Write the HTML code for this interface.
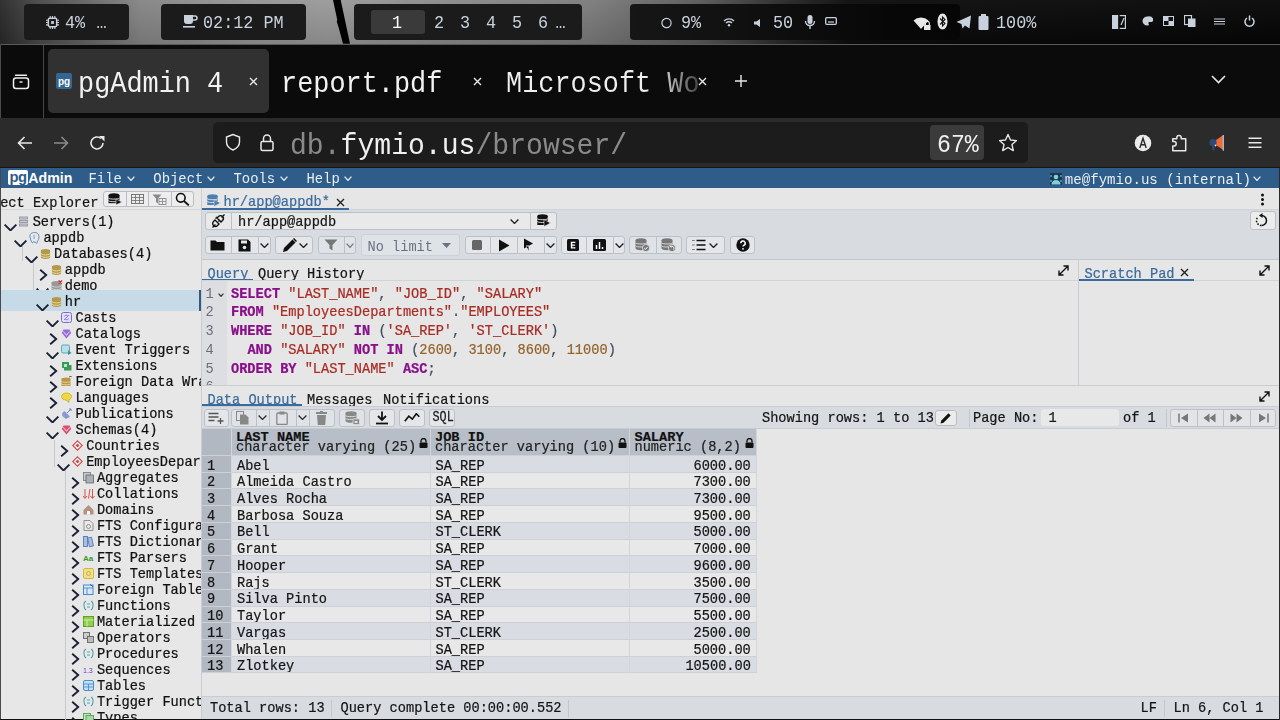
<!DOCTYPE html>
<html><head><meta charset="utf-8">
<style>
*{margin:0;padding:0;box-sizing:border-box}
html,body{width:1280px;height:720px;overflow:hidden;background:#000;font-family:"Liberation Mono",monospace}
.a{position:absolute}
</style></head><body>
<div class="a" style="left:0;top:0;width:1280px;height:44px;background:linear-gradient(90deg,#2a2a2a 0px,#4a4a4a 40px,#858585 140px,#959595 250px,#9a9a9a 330px,#8a8a8a 450px,#7c7c7c 590px,#5a5a5a 700px,#252525 790px,#0c0c0c 850px,#060606 1280px)"></div>
<div class="a" style="left:0px;top:0px;width:1280px;height:44px;background:linear-gradient(180deg,rgba(255,255,255,0.04),rgba(0,0,0,0.12));"></div>
<div class="a" style="left:24px;top:4px;width:105px;height:36px;background:#1b1b1b;border-radius:4px"></div>
<div class="a" style="left:161px;top:4px;width:145px;height:36px;background:#1b1b1b;border-radius:4px"></div>
<div class="a" style="left:354px;top:4px;width:228px;height:36px;background:#1b1b1b;border-radius:4px"></div>
<div class="a" style="left:630px;top:4px;width:330px;height:36px;background:linear-gradient(90deg,#161616,#0e0e0e 45%,#070707 80%,#060606);border-radius:4px"></div>
<svg class="a" style="left:325px;top:0px;" width="35" height="44" viewBox="0 0 35 44"><path d="M8 0L15.7 0L25 43.7L18 43.7L13.5 27L11.7 21.5L12.3 20Z" fill="#000"/></svg>
<div class="a" style="left:371px;top:10px;width:54px;height:24px;background:#3a3a3a;border-radius:3px"></div>
<div class="a" style="left:65.00px;top:15.93px;font-size:16.8px;line-height:16.8px;color:#c9d1dc;font-weight:400;transform:scaleY(1.08);transform-origin:0 12.87px;white-space:pre;">4%</div>
<div class="a" style="left:96.50px;top:16.13px;font-size:16.8px;line-height:16.8px;color:#c9d1dc;font-weight:400;transform:scaleY(1.08);transform-origin:0 12.87px;white-space:pre;">…</div>
<div class="a" style="left:203.00px;top:15.93px;font-size:16.8px;line-height:16.8px;color:#c9d1dc;font-weight:400;transform:scaleY(1.08);transform-origin:0 12.87px;white-space:pre;">02:12 PM</div>
<div class="a" style="left:392.00px;top:15.93px;font-size:16.8px;line-height:16.8px;color:#fff;font-weight:400;transform:scaleY(1.08);transform-origin:0 12.87px;white-space:pre;">1</div>
<div class="a" style="left:434.00px;top:15.93px;font-size:16.8px;line-height:16.8px;color:#c9d1dc;font-weight:400;transform:scaleY(1.08);transform-origin:0 12.87px;white-space:pre;">2</div>
<div class="a" style="left:460.00px;top:15.93px;font-size:16.8px;line-height:16.8px;color:#c9d1dc;font-weight:400;transform:scaleY(1.08);transform-origin:0 12.87px;white-space:pre;">3</div>
<div class="a" style="left:486.00px;top:15.93px;font-size:16.8px;line-height:16.8px;color:#c9d1dc;font-weight:400;transform:scaleY(1.08);transform-origin:0 12.87px;white-space:pre;">4</div>
<div class="a" style="left:512.00px;top:15.93px;font-size:16.8px;line-height:16.8px;color:#c9d1dc;font-weight:400;transform:scaleY(1.08);transform-origin:0 12.87px;white-space:pre;">5</div>
<div class="a" style="left:538.00px;top:15.93px;font-size:16.8px;line-height:16.8px;color:#c9d1dc;font-weight:400;transform:scaleY(1.08);transform-origin:0 12.87px;white-space:pre;">6</div>
<div class="a" style="left:555.50px;top:16.13px;font-size:16.8px;line-height:16.8px;color:#c9d1dc;font-weight:400;transform:scaleY(1.08);transform-origin:0 12.87px;white-space:pre;">…</div>
<div class="a" style="left:681.00px;top:15.93px;font-size:16.8px;line-height:16.8px;color:#c9d1dc;font-weight:400;transform:scaleY(1.08);transform-origin:0 12.87px;white-space:pre;">9%</div>
<div class="a" style="left:773.00px;top:15.93px;font-size:16.8px;line-height:16.8px;color:#c9d1dc;font-weight:400;transform:scaleY(1.08);transform-origin:0 12.87px;white-space:pre;">50</div>
<div class="a" style="left:996.00px;top:15.93px;font-size:16.8px;line-height:16.8px;color:#c9d1dc;font-weight:400;transform:scaleY(1.08);transform-origin:0 12.87px;white-space:pre;">100%</div>
<svg class="a" style="left:45.5px;top:16px;" width="13" height="13" viewBox="0 0 13 13"><g transform="scale(0.93)"><rect x="2.5" y="2.5" width="9" height="9" rx="1.5" fill="none" stroke="#c9d1dc" stroke-width="1.6"/><rect x="5.5" y="5.5" width="3" height="3" fill="#c9d1dc"/><path d="M4.5 0v2.5M7 0v2.5M9.5 0v2.5M4.5 11.5V14M7 11.5V14M9.5 11.5V14M0 4.5h2.5M0 7h2.5M0 9.5h2.5M11.5 4.5H14M11.5 7H14M11.5 9.5H14" stroke="#c9d1dc" stroke-width="1.2"/></g></svg>
<svg class="a" style="left:182px;top:13px;" width="16" height="16" viewBox="0 0 16 16"><path d="M2 2h9v6a3 3 0 0 1-3 3H5a3 3 0 0 1-3-3z" fill="#c9d1dc"/><path d="M11 3h2a1.5 1.5 0 0 1 0 4h-2" fill="none" stroke="#c9d1dc" stroke-width="1.5"/><rect x="1" y="13" width="12" height="1.6" fill="#c9d1dc"/></svg>
<svg class="a" style="left:660px;top:17px;" width="13" height="12" viewBox="0 0 13 12"><circle cx="6.5" cy="6" r="4.6" fill="none" stroke="#c9d1dc" stroke-width="1.2"/></svg>
<svg class="a" style="left:723px;top:17px;" width="12" height="10" viewBox="0 0 12 10"><path d="M1 4a7 7 0 0 1 10 0M3 6a4.2 4.2 0 0 1 6 0" fill="none" stroke="#c9d1dc" stroke-width="1.3"/><circle cx="6" cy="8.3" r="1.2" fill="#c9d1dc"/></svg>
<svg class="a" style="left:754px;top:19px;" width="9" height="8" viewBox="0 0 9 8"><path d="M0 2.5h2.5L6 0v8L2.5 5.5H0z" fill="#c9d1dc"/></svg>
<svg class="a" style="left:804px;top:14px;" width="12" height="16" viewBox="0 0 12 16"><rect x="3.5" y="1" width="5" height="9" rx="2.5" fill="#c9d1dc"/><path d="M1.5 7a4.5 4.5 0 0 0 9 0M6 11.5V15" fill="none" stroke="#c9d1dc" stroke-width="1.4"/></svg>
<svg class="a" style="left:825px;top:17px;" width="12" height="8" viewBox="0 0 12 8"><rect x="0.7" y="0.7" width="10.6" height="6.6" rx="1" fill="none" stroke="#c9d1dc" stroke-width="1.3"/><path d="M3 5h6" stroke="#c9d1dc" stroke-width="1.2"/></svg>
<svg class="a" style="left:913px;top:15px;" width="18" height="15" viewBox="0 0 18 15"><path d="M0.5 5.5a11 11 0 0 1 15 0L8 14z" fill="#e8e8e8"/><rect x="11" y="10" width="6.5" height="5" fill="#e8e8e8"/><path d="M12.3 10V8.3a2 2 0 0 1 4 0V10" fill="none" stroke="#e8e8e8" stroke-width="1.2"/></svg>
<svg class="a" style="left:937px;top:13px;" width="11" height="17" viewBox="0 0 11 17"><ellipse cx="5.5" cy="8.5" rx="5" ry="8" fill="#e8e8e8"/><path d="M3 5.5l5 5-2.5 2.5V4l2.5 2.5-5 5" fill="none" stroke="#111" stroke-width="1.1"/></svg>
<svg class="a" style="left:956px;top:15px;" width="16" height="14" viewBox="0 0 16 14"><path d="M15 0.5L0.5 7l5 2 1 4.5 2.5-3 4.5 3z" fill="#c9d1dc"/></svg>
<svg class="a" style="left:978px;top:14px;" width="11" height="16" viewBox="0 0 11 16"><rect x="3" y="0" width="5" height="2" fill="#c9d1dc"/><rect x="0.5" y="2" width="10" height="14" rx="1" fill="#c9d1dc"/></svg>
<svg class="a" style="left:1112px;top:13px;" width="14" height="17" viewBox="0 0 14 17"><rect x="0.6" y="2.6" width="12.8" height="12.8" fill="none" stroke="#c9d1dc" stroke-width="1.2"/><path d="M0.6 2.6h6v12.8h-6z" fill="#c9d1dc"/><path d="M7 0v17" stroke="#111" stroke-width="1.6"/><path d="M9 12l3-7" stroke="#c9d1dc" stroke-width="1.2"/></svg>
<svg class="a" style="left:1142px;top:16px;" width="11" height="10" viewBox="0 0 11 10"><path d="M5.5 0.5a5 4.5 0 0 0 0 9c1.5 0 1.5-1.3 1-2s0-1.6 1.3-1.6h1.3a2.5 2.5 0 0 0 2.3-2.5A5 4.5 0 0 0 5.5 0.5z" fill="#c9d1dc"/></svg>
<svg class="a" style="left:1163px;top:16px;" width="11" height="10" viewBox="0 0 11 10"><rect x="0.5" y="0.5" width="10" height="9" fill="#c9d1dc"/><rect x="5.5" y="0.5" width="5" height="4.5" fill="#111"/><rect x="0.5" y="5" width="5" height="4.5" fill="#111"/><rect x="0.5" y="0.5" width="10" height="9" fill="none" stroke="#c9d1dc"/></svg>
<svg class="a" style="left:1184px;top:15px;" width="12" height="12" viewBox="0 0 12 12"><rect x="0.5" y="0.5" width="7" height="9" fill="none" stroke="#c9d1dc" stroke-width="1.2"/><rect x="4" y="3.5" width="7.5" height="8.5" fill="#c9d1dc"/></svg>
<svg class="a" style="left:1214px;top:18px;" width="11" height="7" viewBox="0 0 11 7"><path d="M0 1h11M0 3.5h11M0 6h11" stroke="#c9d1dc" stroke-width="1"/></svg>
<svg class="a" style="left:1244px;top:15px;" width="11" height="12" viewBox="0 0 11 12"><path d="M3 3a4.5 4.5 0 1 0 5 0" fill="none" stroke="#c9d1dc" stroke-width="1.5"/><path d="M5.5 0.5v5" stroke="#c9d1dc" stroke-width="1.5"/></svg>
<div class="a" style="left:0px;top:44px;width:1280px;height:74px;background:#0b0b0b;"></div>
<div class="a" style="left:0px;top:44px;width:1280px;height:1px;background:#5a5a5a;"></div>
<div class="a" style="left:0px;top:44px;width:1px;height:676px;background:#4a4a4a;"></div>
<div class="a" style="left:43px;top:45px;width:1px;height:73px;background:#474747;"></div>
<div class="a" style="left:48px;top:49px;width:221px;height:64px;background:#313131;border-radius:5px"></div>
<div class="a" style="left:78.00px;top:71.69px;font-size:26.9px;line-height:26.9px;color:#f2f2f2;font-weight:400;transform:scaleY(1.13);transform-origin:0 20.61px;white-space:pre;">pgAdmin 4</div>
<div class="a" style="left:281.00px;top:71.69px;font-size:26.9px;line-height:26.9px;color:#f2f2f2;font-weight:400;transform:scaleY(1.13);transform-origin:0 20.61px;white-space:pre;">report.pdf</div>
<div class="a" style="left:506.00px;top:71.69px;font-size:26.9px;line-height:26.9px;color:#f2f2f2;font-weight:400;transform:scaleY(1.13);transform-origin:0 20.61px;white-space:pre;background:linear-gradient(90deg,#eee 0,#eee 150px,#444 192px);-webkit-background-clip:text;color:transparent">Microsoft Wo</div>
<svg class="a" style="left:12px;top:72px;" width="18" height="18" viewBox="0 0 18 18"><path d="M3.5 3.2h11" stroke="#f0f0f0" stroke-width="1.4" stroke-linecap="round"/><rect x="1.5" y="6" width="15" height="10.5" rx="2.5" fill="none" stroke="#f0f0f0" stroke-width="1.5"/><path d="M7.5 10h3" stroke="#f0f0f0" stroke-width="1.4"/></svg>
<svg class="a" style="left:56px;top:73px;" width="16" height="16" viewBox="0 0 16 16"><rect width="16" height="16" rx="2" fill="#336791"/><text x="8" y="11.5" font-family="Liberation Sans" font-weight="700" font-size="10" fill="#fff" text-anchor="middle">pg</text></svg>
<svg class="a" style="left:249px;top:77px;" width="9" height="9" viewBox="0 0 9 9"><path d="M1 1L8 8M8 1L1 8" stroke="#e8e8e8" stroke-width="1.4"/></svg>
<svg class="a" style="left:473px;top:77px;" width="9" height="9" viewBox="0 0 9 9"><path d="M1 1L8 8M8 1L1 8" stroke="#e8e8e8" stroke-width="1.4"/></svg>
<svg class="a" style="left:698px;top:77px;" width="9" height="9" viewBox="0 0 9 9"><path d="M1 1L8 8M8 1L1 8" stroke="#e8e8e8" stroke-width="1.4"/></svg>
<svg class="a" style="left:734px;top:74px;" width="14" height="14" viewBox="0 0 14 14"><path d="M7 1v12M1 7h12" stroke="#e8e8e8" stroke-width="1.4"/></svg>
<svg class="a" style="left:1211px;top:75px;" width="15" height="9" viewBox="0 0 15 9"><path d="M1 1l6.5 6.5L14 1" fill="none" stroke="#e8e8e8" stroke-width="1.6"/></svg>
<div class="a" style="left:0px;top:118px;width:1280px;height:49px;background:#2b2b2b;"></div>
<div class="a" style="left:0px;top:167px;width:1280px;height:1px;background:#151515;"></div>
<div class="a" style="left:213px;top:122px;width:815px;height:41px;background:#1c1c1c;border-radius:5px"></div>
<div class="a" style="left:930px;top:125px;width:54px;height:35px;background:#3b3b3b;border-radius:4px"></div>
<div class="a" style="left:290.00px;top:132.97px;font-size:28.1px;line-height:28.1px;color:#f0f0f0;font-weight:400;transform:scaleY(1.05);transform-origin:0 21.53px;white-space:pre;"><span style="color:#8a8a8a">db.</span>fymio.us<span style="color:#8a8a8a">/browser/</span></div>
<div class="a" style="left:937.00px;top:134.73px;font-size:23.2px;line-height:23.2px;color:#f0f0f0;font-weight:400;transform:scaleY(1.15);transform-origin:0 17.77px;white-space:pre;">67%</div>
<svg class="a" style="left:16px;top:134px;" width="18" height="18" viewBox="0 0 18 18"><path d="M16 9H2.5M8.5 3L2.5 9l6 6" fill="none" stroke="#e8e8e8" stroke-width="1.6"/></svg>
<svg class="a" style="left:52px;top:134px;" width="18" height="18" viewBox="0 0 18 18"><path d="M2 9h13.5M9.5 3l6 6-6 6" fill="none" stroke="#8a8a8a" stroke-width="1.6"/></svg>
<svg class="a" style="left:88px;top:134px;" width="18" height="18" viewBox="0 0 18 18"><path d="M15 9a6 6 0 1 1-2-4.5" fill="none" stroke="#e8e8e8" stroke-width="1.6"/><path d="M11 2h5.5v5.5z" fill="#e8e8e8"/></svg>
<svg class="a" style="left:224px;top:133px;" width="18" height="19" viewBox="0 0 18 19"><path d="M9 1.5L2.5 4v5c0 4 3 6.5 6.5 8 3.5-1.5 6.5-4 6.5-8V4z" fill="none" stroke="#e8e8e8" stroke-width="1.4"/></svg>
<svg class="a" style="left:259px;top:133px;" width="16" height="19" viewBox="0 0 16 19"><rect x="2" y="8.5" width="12" height="9" rx="1.5" fill="none" stroke="#e8e8e8" stroke-width="1.5"/><path d="M4.5 8.5V5.5a3.5 3.5 0 0 1 7 0v3" fill="none" stroke="#e8e8e8" stroke-width="1.5"/></svg>
<svg class="a" style="left:998px;top:133px;" width="20" height="19" viewBox="0 0 20 19"><path d="M10 1.5l2.5 5.5 6 .6-4.5 4 1.3 6L10 14.5l-5.3 3.1 1.3-6-4.5-4 6-.6z" fill="none" stroke="#e8e8e8" stroke-width="1.4" stroke-linejoin="round"/></svg>
<svg class="a" style="left:1134px;top:134px;" width="18" height="18" viewBox="0 0 18 18"><circle cx="9" cy="9" r="8.3" fill="#ececec"/><path d="M5.8 14L9 4.2 12.2 14M6.9 10.8h4.2" fill="none" stroke="#2b2b2b" stroke-width="1.4"/></svg>
<svg class="a" style="left:1172px;top:134px;" width="15" height="18" viewBox="0 0 15 18"><path d="M0.8 16.8V12h1.2a2.2 2.2 0 0 0 0-4.4H0.8V4.8h4V3.6a2.2 2.2 0 0 1 4.4 0v1.2h4.5v12z" fill="none" stroke="#e8e8e8" stroke-width="1.5" stroke-linejoin="round"/></svg>
<svg class="a" style="left:1208px;top:134px;" width="18" height="18" viewBox="0 0 18 18"><path d="M8 6l7-4.8v14.6L8 11z" fill="#f26a36"/><path d="M15.3 1v15.8" stroke="#a8c8e8" stroke-width="1.2"/><circle cx="5" cy="8.5" r="3.6" fill="#2a4a7a"/><path d="M3.8 11l1 5.5h1.8l-.6-5z" fill="#2a4a7a"/><circle cx="7.5" cy="11.5" r="0.9" fill="#ddd"/></svg>
<svg class="a" style="left:1248px;top:137px;" width="14" height="12" viewBox="0 0 14 12"><path d="M0.5 1.3h13M0.5 5.8h13M0.5 10.3h13" stroke="#e8e8e8" stroke-width="1.4"/></svg>
<div class="a" style="left:1px;top:168px;width:1279px;height:20px;background:#2e5d89;"></div>
<div class="a" style="left:1px;top:188px;width:1279px;height:531px;background:#e7e7e7;"></div>
<div class="a" style="left:0px;top:719px;width:1280px;height:1px;background:#111;"></div>
<div class="a" style="left:8px;top:170px;width:20px;height:15px;background:#fff;border-radius:2px"></div>
<div class="a" style="left:9.60px;top:170.26px;font-size:14.8px;line-height:14.8px;color:#2e5d89;font-weight:700;transform:scaleY(1.0);transform-origin:0 11.34px;white-space:pre;font-family:'Liberation Sans';letter-spacing:-0.6px">pg</div>
<div class="a" style="left:28.30px;top:170.72px;font-size:14.2px;line-height:14.2px;color:#fff;font-weight:700;transform:scaleY(1.0);transform-origin:0 10.88px;white-space:pre;font-family:'Liberation Sans'">Admin</div>
<div class="a" style="left:88.50px;top:172.95px;font-size:13.9px;line-height:13.9px;color:#e8eef4;font-weight:400;transform:scaleY(1.02);transform-origin:0 10.65px;white-space:pre;">File</div>
<svg class="a" style="left:126.6px;top:176px;" width="8" height="5" viewBox="0 0 8 5"><path d="M0.6 0.6L4.0 4.4L7.4 0.6" fill="none" stroke="#e8eef4" stroke-width="1.3"/></svg>
<div class="a" style="left:153.30px;top:172.95px;font-size:13.9px;line-height:13.9px;color:#e8eef4;font-weight:400;transform:scaleY(1.02);transform-origin:0 10.65px;white-space:pre;">Object</div>
<svg class="a" style="left:207px;top:176px;" width="8" height="5" viewBox="0 0 8 5"><path d="M0.6 0.6L4.0 4.4L7.4 0.6" fill="none" stroke="#e8eef4" stroke-width="1.3"/></svg>
<div class="a" style="left:233.50px;top:172.95px;font-size:13.9px;line-height:13.9px;color:#e8eef4;font-weight:400;transform:scaleY(1.02);transform-origin:0 10.65px;white-space:pre;">Tools</div>
<svg class="a" style="left:279.7px;top:176px;" width="8" height="5" viewBox="0 0 8 5"><path d="M0.6 0.6L4.0 4.4L7.4 0.6" fill="none" stroke="#e8eef4" stroke-width="1.3"/></svg>
<div class="a" style="left:306.40px;top:172.95px;font-size:13.9px;line-height:13.9px;color:#e8eef4;font-weight:400;transform:scaleY(1.02);transform-origin:0 10.65px;white-space:pre;">Help</div>
<svg class="a" style="left:343.5px;top:176px;" width="8" height="5" viewBox="0 0 8 5"><path d="M0.6 0.6L4.0 4.4L7.4 0.6" fill="none" stroke="#e8eef4" stroke-width="1.3"/></svg>
<svg class="a" style="left:1050px;top:173px;" width="12" height="12" viewBox="0 0 12 12"><rect width="12" height="12" fill="#1d3a55"/><circle cx="6" cy="4" r="2.3" fill="#7fd0d8"/><path d="M1.5 11.5c0-3 2-4.5 4.5-4.5s4.5 1.5 4.5 4.5z" fill="#7fd0d8"/><path d="M0 3h2M10 3h2M0 8h2M10 8h2" stroke="#7fd0d8" stroke-width="1"/></svg>
<div class="a" style="left:1064.80px;top:172.60px;font-size:14.1px;line-height:14.1px;color:#e8eef4;font-weight:400;transform:scaleY(1.02);transform-origin:0 10.80px;white-space:pre;">me@fymio.us (internal)</div>
<svg class="a" style="left:1253px;top:176px;" width="8" height="5" viewBox="0 0 8 5"><path d="M0.6 0.6L4.0 4.4L7.4 0.6" fill="none" stroke="#e8eef4" stroke-width="1.3"/></svg>
<div class="a" style="left:1px;top:188px;width:200px;height:21px;background:#e8e8e8;"></div>
<div class="a" style="left:1px;top:209px;width:200px;height:1px;background:#d3d6da;"></div>
<div class="a" style="left:-24.40px;top:196.54px;font-size:13.65px;line-height:13.65px;color:#151515;font-weight:400;transform:scaleY(1.1);transform-origin:0 10.46px;white-space:pre;-webkit-text-stroke:0.22px currentColor;">Object Explorer</div>
<div class="a" style="left:103px;top:191px;width:91px;height:16px;background:#ededed;border:1px solid #b9bdc3;border-radius:3px"></div>
<div class="a" style="left:126px;top:191px;width:1px;height:16px;background:#b9bdc3;"></div>
<div class="a" style="left:148px;top:191px;width:1px;height:16px;background:#b9bdc3;"></div>
<div class="a" style="left:171px;top:191px;width:1px;height:16px;background:#b9bdc3;"></div>
<svg class="a" style="left:108px;top:193px;" width="14" height="12" viewBox="0 0 14 12"><ellipse cx="6" cy="2.2" rx="5.5" ry="2" fill="#111"/><rect x="0.5" y="2.2" width="11" height="8" fill="#111"/><path d="M0.5 5.2c1.5 1.2 9.5 1.2 11 0M0.5 7.8c1.5 1.2 9.5 1.2 11 0" stroke="#ededed" stroke-width="0.9" fill="none"/><path d="M8 6l6 3-6 3z" fill="#111" stroke="#ededed" stroke-width="0.6"/></svg>
<svg class="a" style="left:131px;top:194px;" width="13" height="10" viewBox="0 0 13 10"><rect x="0.5" y="0.5" width="12" height="9" fill="none" stroke="#777" stroke-width="1"/><path d="M0.5 3.5h12M0.5 6.5h12M4.5 0.5v9M8.5 0.5v9" stroke="#777" stroke-width="0.9"/></svg>
<svg class="a" style="left:152px;top:194px;" width="15" height="11" viewBox="0 0 15 11"><path d="M0.5 0.5h9L6 4.5v5L4 8V4.5z" fill="#888"/><rect x="7" y="4.5" width="7" height="6" fill="none" stroke="#888" stroke-width="0.9"/><path d="M7 7.5h7M10.5 4.5v6" stroke="#888" stroke-width="0.8"/></svg>
<svg class="a" style="left:175px;top:192px;" width="15" height="14" viewBox="0 0 15 14"><circle cx="5.8" cy="5.8" r="4.3" fill="none" stroke="#111" stroke-width="1.6"/><path d="M9 9l4.8 4.4" stroke="#111" stroke-width="1.8"/></svg>
<div class="a" style="left:22px;top:246px;width:1px;height:15px;background:#c4c9d0;"></div>
<div class="a" style="left:33px;top:262px;width:1px;height:47px;background:#c4c9d0;"></div>
<div class="a" style="left:54px;top:440px;width:1px;height:27px;background:#c4c9d0;"></div>
<div class="a" style="left:65px;top:467px;width:1px;height:253px;background:#c4c9d0;"></div>
<svg class="a" style="left:18px;top:216px;" width="12" height="12" viewBox="0 0 12 12"><rect x="1" y="0.5" width="9" height="3" fill="#9a9aa8"/><rect x="1" y="4" width="9" height="3" fill="#9a9aa8"/><rect x="1" y="7.5" width="9" height="3" fill="#9a9aa8"/><path d="M2 2h7M2 5.5h7M2 9h7" stroke="#e0e0e8" stroke-width="0.7"/></svg>
<svg class="a" style="left:4px;top:224px;" width="13" height="7" viewBox="0 0 13 7"><path d="M0.6 0.6L6.5 6.4L12.4 0.6" fill="none" stroke="#1a2035" stroke-width="1.9"/></svg>
<div class="a" style="left:32.70px;top:215.54px;font-size:13.65px;line-height:13.65px;color:#111;font-weight:400;transform:scaleY(1.1);transform-origin:0 10.46px;white-space:pre;-webkit-text-stroke:0.22px currentColor;">Servers(1)</div>
<svg class="a" style="left:29px;top:232px;" width="12" height="12" viewBox="0 0 12 12"><path d="M5.5 0.5C2.5 0.5 0.5 2 1 5c.3 2 1 4 2 5.5.6.6 1.3.2 1.5-1 .3.6 1 .8 1.5.6.6 0 1 .6 1.2 1.2.5.2 1-.5 1-1.5.8-1 1.8-3 1.8-5 0-3-2-4.3-4.5-4.3z" fill="none" stroke="#5b8fc8" stroke-width="1"/><path d="M5 3v4" stroke="#5b8fc8" stroke-width="0.8"/></svg>
<svg class="a" style="left:14px;top:240px;" width="13" height="7" viewBox="0 0 13 7"><path d="M0.6 0.6L6.5 6.4L12.4 0.6" fill="none" stroke="#1a2035" stroke-width="1.9"/></svg>
<div class="a" style="left:43.40px;top:231.54px;font-size:13.65px;line-height:13.65px;color:#111;font-weight:400;transform:scaleY(1.1);transform-origin:0 10.46px;white-space:pre;-webkit-text-stroke:0.22px currentColor;">appdb</div>
<svg class="a" style="left:40px;top:248px;" width="12" height="12" viewBox="0 0 12 12"><ellipse cx="5.5" cy="2.8" rx="4.6" ry="1.7" fill="#b49a48"/><path d="M0.9 2.8v6.5c0 1 2 1.7 4.6 1.7s4.6-.7 4.6-1.7V2.8" fill="#b49a48"/><path d="M0.9 5.2c0 1 2 1.7 4.6 1.7s4.6-.7 4.6-1.7M0.9 7.6c0 1 2 1.7 4.6 1.7s4.6-.7 4.6-1.7" fill="none" stroke="#efe2b0" stroke-width="0.9"/></svg>
<svg class="a" style="left:25px;top:256px;" width="13" height="7" viewBox="0 0 13 7"><path d="M0.6 0.6L6.5 6.4L12.4 0.6" fill="none" stroke="#1a2035" stroke-width="1.9"/></svg>
<div class="a" style="left:54.10px;top:247.54px;font-size:13.65px;line-height:13.65px;color:#111;font-weight:400;transform:scaleY(1.1);transform-origin:0 10.46px;white-space:pre;-webkit-text-stroke:0.22px currentColor;">Databases(4)</div>
<svg class="a" style="left:51px;top:264px;" width="12" height="12" viewBox="0 0 12 12"><ellipse cx="5.5" cy="2.8" rx="4.6" ry="1.7" fill="#b49a48"/><path d="M0.9 2.8v6.5c0 1 2 1.7 4.6 1.7s4.6-.7 4.6-1.7V2.8" fill="#b49a48"/><path d="M0.9 5.2c0 1 2 1.7 4.6 1.7s4.6-.7 4.6-1.7M0.9 7.6c0 1 2 1.7 4.6 1.7s4.6-.7 4.6-1.7" fill="none" stroke="#efe2b0" stroke-width="0.9"/></svg>
<svg class="a" style="left:39px;top:269px;" width="9" height="12" viewBox="0 0 9 12"><path d="M1.2 0.8L7.2 6 1.2 11.2" fill="none" stroke="#1a2035" stroke-width="1.9"/></svg>
<div class="a" style="left:64.80px;top:263.54px;font-size:13.65px;line-height:13.65px;color:#111;font-weight:400;transform:scaleY(1.1);transform-origin:0 10.46px;white-space:pre;-webkit-text-stroke:0.22px currentColor;">appdb</div>
<svg class="a" style="left:51px;top:280px;" width="12" height="12" viewBox="0 0 12 12"><ellipse cx="5.5" cy="2.8" rx="5" ry="1.8" fill="#999"/><path d="M0.5 2.8v7c0 1 2.2 1.8 5 1.8s5-.8 5-1.8v-7" fill="#999"/><path d="M0.5 5.3c0 1 2.2 1.8 5 1.8s5-.8 5-1.8M0.5 7.8c0 1 2.2 1.8 5 1.8s5-.8 5-1.8" fill="none" stroke="#ddd" stroke-width="0.8"/><path d="M7.5 0.5l3.5 3M11 0.5l-3.5 3" stroke="#e02020" stroke-width="1.3"/></svg>
<svg class="a" style="left:36px;top:288px;" width="13" height="7" viewBox="0 0 13 7"><path d="M0.6 0.6L6.5 6.4L12.4 0.6" fill="none" stroke="#1a2035" stroke-width="1.9"/></svg>
<div class="a" style="left:64.80px;top:279.54px;font-size:13.65px;line-height:13.65px;color:#111;font-weight:400;transform:scaleY(1.1);transform-origin:0 10.46px;white-space:pre;-webkit-text-stroke:0.22px currentColor;">demo</div>
<div class="a" style="left:1px;top:290px;width:198px;height:21px;background:#c6dae7;"></div>
<div class="a" style="left:199px;top:290px;width:2px;height:21px;background:#2d5b86;"></div>
<svg class="a" style="left:51px;top:296px;" width="12" height="12" viewBox="0 0 12 12"><ellipse cx="5.5" cy="2.8" rx="4.6" ry="1.7" fill="#b49a48"/><path d="M0.9 2.8v6.5c0 1 2 1.7 4.6 1.7s4.6-.7 4.6-1.7V2.8" fill="#b49a48"/><path d="M0.9 5.2c0 1 2 1.7 4.6 1.7s4.6-.7 4.6-1.7M0.9 7.6c0 1 2 1.7 4.6 1.7s4.6-.7 4.6-1.7" fill="none" stroke="#efe2b0" stroke-width="0.9"/></svg>
<svg class="a" style="left:36px;top:304px;" width="13" height="7" viewBox="0 0 13 7"><path d="M0.6 0.6L6.5 6.4L12.4 0.6" fill="none" stroke="#1a2035" stroke-width="1.9"/></svg>
<div class="a" style="left:64.80px;top:295.54px;font-size:13.65px;line-height:13.65px;color:#111;font-weight:400;transform:scaleY(1.1);transform-origin:0 10.46px;white-space:pre;-webkit-text-stroke:0.22px currentColor;">hr</div>
<svg class="a" style="left:61px;top:312px;" width="12" height="12" viewBox="0 0 12 12"><rect x="0.5" y="0.5" width="10" height="10" rx="2" fill="#e4e0f8" stroke="#7a6ad0" stroke-width="1"/><path d="M3 8l5-5M3.5 4.5a2 2 0 0 1 3-1M7.5 6.5a2 2 0 0 1-3 1" stroke="#7a6ad0" stroke-width="0.9" fill="none"/></svg>
<svg class="a" style="left:46px;top:320px;" width="13" height="7" viewBox="0 0 13 7"><path d="M0.6 0.6L6.5 6.4L12.4 0.6" fill="none" stroke="#1a2035" stroke-width="1.9"/></svg>
<div class="a" style="left:75.50px;top:311.54px;font-size:13.65px;line-height:13.65px;color:#111;font-weight:400;transform:scaleY(1.1);transform-origin:0 10.46px;white-space:pre;-webkit-text-stroke:0.22px currentColor;">Casts</div>
<svg class="a" style="left:61px;top:328px;" width="12" height="12" viewBox="0 0 12 12"><path d="M5.5 10.5L0.8 5 2.5 1.5h6L10.2 5z" fill="#9a6ad8"/><path d="M3 4l2.5 3 2.5-3M2 3l3.5 4.5L9 3" stroke="#e8d8f8" stroke-width="0.6" fill="none"/></svg>
<svg class="a" style="left:49px;top:333px;" width="9" height="12" viewBox="0 0 9 12"><path d="M1.2 0.8L7.2 6 1.2 11.2" fill="none" stroke="#1a2035" stroke-width="1.9"/></svg>
<div class="a" style="left:75.50px;top:327.54px;font-size:13.65px;line-height:13.65px;color:#111;font-weight:400;transform:scaleY(1.1);transform-origin:0 10.46px;white-space:pre;-webkit-text-stroke:0.22px currentColor;">Catalogs</div>
<svg class="a" style="left:61px;top:344px;" width="12" height="12" viewBox="0 0 12 12"><rect x="0.5" y="1" width="8" height="8" rx="1.5" fill="#b8e0e8" stroke="#58a8b8" stroke-width="1"/><path d="M7 6l3.5 3-3.5 2z" fill="#3890a8"/></svg>
<svg class="a" style="left:46px;top:352px;" width="13" height="7" viewBox="0 0 13 7"><path d="M0.6 0.6L6.5 6.4L12.4 0.6" fill="none" stroke="#1a2035" stroke-width="1.9"/></svg>
<div class="a" style="left:75.50px;top:343.54px;font-size:13.65px;line-height:13.65px;color:#111;font-weight:400;transform:scaleY(1.1);transform-origin:0 10.46px;white-space:pre;-webkit-text-stroke:0.22px currentColor;">Event Triggers</div>
<svg class="a" style="left:61px;top:360px;" width="12" height="12" viewBox="0 0 12 12"><path d="M1 2h7v3h2.5v5.5H3V8H1z" fill="#3a9a5a"/><path d="M3 4h3v3H3z" fill="#b8e8c8"/></svg>
<svg class="a" style="left:49px;top:365px;" width="9" height="12" viewBox="0 0 9 12"><path d="M1.2 0.8L7.2 6 1.2 11.2" fill="none" stroke="#1a2035" stroke-width="1.9"/></svg>
<div class="a" style="left:75.50px;top:359.54px;font-size:13.65px;line-height:13.65px;color:#111;font-weight:400;transform:scaleY(1.1);transform-origin:0 10.46px;white-space:pre;-webkit-text-stroke:0.22px currentColor;">Extensions</div>
<svg class="a" style="left:61px;top:376px;" width="12" height="12" viewBox="0 0 12 12"><ellipse cx="5" cy="3" rx="4.5" ry="1.5" fill="#b89848"/><rect x="0.5" y="3" width="9" height="7" fill="#b89848"/><path d="M0.5 5.5c1 1 8 1 9 0M0.5 8c1 1 8 1 9 0" stroke="#f0e0a8" stroke-width="0.8" fill="none"/><path d="M8 1l3-1" stroke="#806020" stroke-width="1"/></svg>
<svg class="a" style="left:49px;top:381px;" width="9" height="12" viewBox="0 0 9 12"><path d="M1.2 0.8L7.2 6 1.2 11.2" fill="none" stroke="#1a2035" stroke-width="1.9"/></svg>
<div class="a" style="left:75.50px;top:375.54px;font-size:13.65px;line-height:13.65px;color:#111;font-weight:400;transform:scaleY(1.1);transform-origin:0 10.46px;white-space:pre;-webkit-text-stroke:0.22px currentColor;">Foreign Data Wrappers</div>
<svg class="a" style="left:61px;top:392px;" width="12" height="12" viewBox="0 0 12 12"><path d="M5.5 1C2.5 1 0.5 2.5 0.5 4.5S2.5 8 5 8l3 2.5V7.8c1.6-.6 2.5-1.8 2.5-3.3C10.5 2.5 8.5 1 5.5 1z" fill="#f0d840" stroke="#c0a820" stroke-width="0.7"/></svg>
<svg class="a" style="left:49px;top:397px;" width="9" height="12" viewBox="0 0 9 12"><path d="M1.2 0.8L7.2 6 1.2 11.2" fill="none" stroke="#1a2035" stroke-width="1.9"/></svg>
<div class="a" style="left:75.50px;top:391.54px;font-size:13.65px;line-height:13.65px;color:#111;font-weight:400;transform:scaleY(1.1);transform-origin:0 10.46px;white-space:pre;-webkit-text-stroke:0.22px currentColor;">Languages</div>
<svg class="a" style="left:61px;top:408px;" width="12" height="12" viewBox="0 0 12 12"><path d="M1 6a4.5 4.5 0 0 0 8 2.5L3.5 3A4.5 4.5 0 0 0 1 6z" fill="#8a9ad8"/><path d="M6 5l4-4M8 1h2v2" stroke="#7080c0" stroke-width="1" fill="none"/><circle cx="5" cy="10" r="0.8" fill="#7080c0"/></svg>
<svg class="a" style="left:46px;top:416px;" width="13" height="7" viewBox="0 0 13 7"><path d="M0.6 0.6L6.5 6.4L12.4 0.6" fill="none" stroke="#1a2035" stroke-width="1.9"/></svg>
<div class="a" style="left:75.50px;top:407.54px;font-size:13.65px;line-height:13.65px;color:#111;font-weight:400;transform:scaleY(1.1);transform-origin:0 10.46px;white-space:pre;-webkit-text-stroke:0.22px currentColor;">Publications</div>
<svg class="a" style="left:61px;top:424px;" width="12" height="12" viewBox="0 0 12 12"><path d="M5.5 10.5L0.8 5 2.5 1.5h6L10.2 5z" fill="#d85070"/><path d="M3 4l2.5 3 2.5-3M2 3l3.5 4.5L9 3" stroke="#f8d8e0" stroke-width="0.6" fill="none"/></svg>
<svg class="a" style="left:46px;top:432px;" width="13" height="7" viewBox="0 0 13 7"><path d="M0.6 0.6L6.5 6.4L12.4 0.6" fill="none" stroke="#1a2035" stroke-width="1.9"/></svg>
<div class="a" style="left:75.50px;top:423.54px;font-size:13.65px;line-height:13.65px;color:#111;font-weight:400;transform:scaleY(1.1);transform-origin:0 10.46px;white-space:pre;-webkit-text-stroke:0.22px currentColor;">Schemas(4)</div>
<svg class="a" style="left:72px;top:440px;" width="12" height="12" viewBox="0 0 12 12"><path d="M5.5 0.8L10.2 5.5 5.5 10.2 0.8 5.5z" fill="#fff" stroke="#d04848" stroke-width="1.1"/><rect x="4" y="4" width="3" height="3" fill="#d04848" transform="rotate(45 5.5 5.5)"/></svg>
<svg class="a" style="left:60px;top:445px;" width="9" height="12" viewBox="0 0 9 12"><path d="M1.2 0.8L7.2 6 1.2 11.2" fill="none" stroke="#1a2035" stroke-width="1.9"/></svg>
<div class="a" style="left:86.20px;top:439.54px;font-size:13.65px;line-height:13.65px;color:#111;font-weight:400;transform:scaleY(1.1);transform-origin:0 10.46px;white-space:pre;-webkit-text-stroke:0.22px currentColor;">Countries</div>
<svg class="a" style="left:72px;top:456px;" width="12" height="12" viewBox="0 0 12 12"><path d="M5.5 0.8L10.2 5.5 5.5 10.2 0.8 5.5z" fill="#fff" stroke="#d04848" stroke-width="1.1"/><rect x="4" y="4" width="3" height="3" fill="#d04848" transform="rotate(45 5.5 5.5)"/></svg>
<svg class="a" style="left:57px;top:464px;" width="13" height="7" viewBox="0 0 13 7"><path d="M0.6 0.6L6.5 6.4L12.4 0.6" fill="none" stroke="#1a2035" stroke-width="1.9"/></svg>
<div class="a" style="left:86.20px;top:455.54px;font-size:13.65px;line-height:13.65px;color:#111;font-weight:400;transform:scaleY(1.1);transform-origin:0 10.46px;white-space:pre;-webkit-text-stroke:0.22px currentColor;">EmployeesDepartments</div>
<svg class="a" style="left:83px;top:472px;" width="12" height="12" viewBox="0 0 12 12"><rect x="0.5" y="0.5" width="7" height="8" fill="#c8c8d0" stroke="#777" stroke-width="0.8"/><rect x="3" y="3" width="7.5" height="8" fill="#a8b0b8" stroke="#666" stroke-width="0.8"/></svg>
<svg class="a" style="left:71px;top:477px;" width="9" height="12" viewBox="0 0 9 12"><path d="M1.2 0.8L7.2 6 1.2 11.2" fill="none" stroke="#1a2035" stroke-width="1.9"/></svg>
<div class="a" style="left:96.90px;top:471.54px;font-size:13.65px;line-height:13.65px;color:#111;font-weight:400;transform:scaleY(1.1);transform-origin:0 10.46px;white-space:pre;-webkit-text-stroke:0.22px currentColor;">Aggregates</div>
<svg class="a" style="left:83px;top:488px;" width="12" height="12" viewBox="0 0 12 12"><path d="M2 1v9M0 8l2 2.5L4 8M7 1l-1.5 9.5M9.5 1v9M7.5 8l2 2.5 2-2.5" stroke="#d85050" stroke-width="1" fill="none"/></svg>
<svg class="a" style="left:71px;top:493px;" width="9" height="12" viewBox="0 0 9 12"><path d="M1.2 0.8L7.2 6 1.2 11.2" fill="none" stroke="#1a2035" stroke-width="1.9"/></svg>
<div class="a" style="left:96.90px;top:487.54px;font-size:13.65px;line-height:13.65px;color:#111;font-weight:400;transform:scaleY(1.1);transform-origin:0 10.46px;white-space:pre;-webkit-text-stroke:0.22px currentColor;">Collations</div>
<svg class="a" style="left:83px;top:504px;" width="12" height="12" viewBox="0 0 12 12"><path d="M0.5 6L5.5 1l5 5v4.5h-10z" fill="#b89080"/><rect x="4" y="7" width="3" height="3.5" fill="#fff"/></svg>
<svg class="a" style="left:71px;top:509px;" width="9" height="12" viewBox="0 0 9 12"><path d="M1.2 0.8L7.2 6 1.2 11.2" fill="none" stroke="#1a2035" stroke-width="1.9"/></svg>
<div class="a" style="left:96.90px;top:503.54px;font-size:13.65px;line-height:13.65px;color:#111;font-weight:400;transform:scaleY(1.1);transform-origin:0 10.46px;white-space:pre;-webkit-text-stroke:0.22px currentColor;">Domains</div>
<svg class="a" style="left:83px;top:520px;" width="12" height="12" viewBox="0 0 12 12"><path d="M1 0.5h6l3 3v7H1z" fill="#e8e8e8" stroke="#888" stroke-width="0.9"/><circle cx="5.5" cy="6.5" r="2" fill="none" stroke="#888" stroke-width="0.9"/></svg>
<svg class="a" style="left:71px;top:525px;" width="9" height="12" viewBox="0 0 9 12"><path d="M1.2 0.8L7.2 6 1.2 11.2" fill="none" stroke="#1a2035" stroke-width="1.9"/></svg>
<div class="a" style="left:96.90px;top:519.54px;font-size:13.65px;line-height:13.65px;color:#111;font-weight:400;transform:scaleY(1.1);transform-origin:0 10.46px;white-space:pre;-webkit-text-stroke:0.22px currentColor;">FTS Configurations</div>
<svg class="a" style="left:83px;top:536px;" width="12" height="12" viewBox="0 0 12 12"><rect x="0.5" y="0.5" width="4" height="10" fill="#a8c0e0" stroke="#5a7ab8" stroke-width="0.9"/><rect x="5.5" y="1.5" width="4" height="9" fill="#a8c0e0" stroke="#5a7ab8" stroke-width="0.9" transform="rotate(-12 7.5 6)"/></svg>
<svg class="a" style="left:71px;top:541px;" width="9" height="12" viewBox="0 0 9 12"><path d="M1.2 0.8L7.2 6 1.2 11.2" fill="none" stroke="#1a2035" stroke-width="1.9"/></svg>
<div class="a" style="left:96.90px;top:535.54px;font-size:13.65px;line-height:13.65px;color:#111;font-weight:400;transform:scaleY(1.1);transform-origin:0 10.46px;white-space:pre;-webkit-text-stroke:0.22px currentColor;">FTS Dictionaries</div>
<svg class="a" style="left:83px;top:552px;" width="12" height="12" viewBox="0 0 12 12"><text x="0" y="9" font-family="Liberation Sans" font-weight="700" font-size="8" fill="#3a9a2a">Aa</text></svg>
<svg class="a" style="left:71px;top:557px;" width="9" height="12" viewBox="0 0 9 12"><path d="M1.2 0.8L7.2 6 1.2 11.2" fill="none" stroke="#1a2035" stroke-width="1.9"/></svg>
<div class="a" style="left:96.90px;top:551.54px;font-size:13.65px;line-height:13.65px;color:#111;font-weight:400;transform:scaleY(1.1);transform-origin:0 10.46px;white-space:pre;-webkit-text-stroke:0.22px currentColor;">FTS Parsers</div>
<svg class="a" style="left:83px;top:568px;" width="12" height="12" viewBox="0 0 12 12"><rect x="0.5" y="0.5" width="10" height="10" rx="1.5" fill="#f0e088" stroke="#d0b848" stroke-width="1"/><circle cx="5.5" cy="5.5" r="2" fill="none" stroke="#c0a030" stroke-width="0.8"/></svg>
<svg class="a" style="left:71px;top:573px;" width="9" height="12" viewBox="0 0 9 12"><path d="M1.2 0.8L7.2 6 1.2 11.2" fill="none" stroke="#1a2035" stroke-width="1.9"/></svg>
<div class="a" style="left:96.90px;top:567.54px;font-size:13.65px;line-height:13.65px;color:#111;font-weight:400;transform:scaleY(1.1);transform-origin:0 10.46px;white-space:pre;-webkit-text-stroke:0.22px currentColor;">FTS Templates</div>
<svg class="a" style="left:83px;top:584px;" width="12" height="12" viewBox="0 0 12 12"><rect x="0.5" y="1" width="9.5" height="9.5" fill="#d8e8f8" stroke="#4a8ad0" stroke-width="1"/><path d="M0.5 4h9.5M4 4v6.5" stroke="#4a8ad0" stroke-width="0.9"/><path d="M7 0.5l3 2" stroke="#2a6ab0" stroke-width="1"/></svg>
<svg class="a" style="left:71px;top:589px;" width="9" height="12" viewBox="0 0 9 12"><path d="M1.2 0.8L7.2 6 1.2 11.2" fill="none" stroke="#1a2035" stroke-width="1.9"/></svg>
<div class="a" style="left:96.90px;top:583.54px;font-size:13.65px;line-height:13.65px;color:#111;font-weight:400;transform:scaleY(1.1);transform-origin:0 10.46px;white-space:pre;-webkit-text-stroke:0.22px currentColor;">Foreign Tables</div>
<svg class="a" style="left:83px;top:600px;" width="12" height="12" viewBox="0 0 12 12"><path d="M3 1C1 2 0.8 4 1 5.5S1 9 3 10M8 1c2 1 2.2 3 2 4.5S10 9 8 10" fill="none" stroke="#48a0b0" stroke-width="1.1"/><path d="M4 4h3M4 7h3" stroke="#48a0b0" stroke-width="0.9"/></svg>
<svg class="a" style="left:71px;top:605px;" width="9" height="12" viewBox="0 0 9 12"><path d="M1.2 0.8L7.2 6 1.2 11.2" fill="none" stroke="#1a2035" stroke-width="1.9"/></svg>
<div class="a" style="left:96.90px;top:599.54px;font-size:13.65px;line-height:13.65px;color:#111;font-weight:400;transform:scaleY(1.1);transform-origin:0 10.46px;white-space:pre;-webkit-text-stroke:0.22px currentColor;">Functions</div>
<svg class="a" style="left:83px;top:616px;" width="12" height="12" viewBox="0 0 12 12"><rect x="0.5" y="0.5" width="10" height="10" fill="#90d050" stroke="#60a020" stroke-width="1"/><path d="M0.5 4h10M4 4v6.5" stroke="#d8f0b0" stroke-width="0.9"/></svg>
<svg class="a" style="left:71px;top:621px;" width="9" height="12" viewBox="0 0 9 12"><path d="M1.2 0.8L7.2 6 1.2 11.2" fill="none" stroke="#1a2035" stroke-width="1.9"/></svg>
<div class="a" style="left:96.90px;top:615.54px;font-size:13.65px;line-height:13.65px;color:#111;font-weight:400;transform:scaleY(1.1);transform-origin:0 10.46px;white-space:pre;-webkit-text-stroke:0.22px currentColor;">Materialized Views</div>
<svg class="a" style="left:83px;top:632px;" width="12" height="12" viewBox="0 0 12 12"><rect x="0.5" y="0.5" width="6" height="6" fill="#ccc" stroke="#666" stroke-width="0.9"/><rect x="4.5" y="4.5" width="6" height="6" fill="#bbb" stroke="#666" stroke-width="0.9"/></svg>
<svg class="a" style="left:71px;top:637px;" width="9" height="12" viewBox="0 0 9 12"><path d="M1.2 0.8L7.2 6 1.2 11.2" fill="none" stroke="#1a2035" stroke-width="1.9"/></svg>
<div class="a" style="left:96.90px;top:631.54px;font-size:13.65px;line-height:13.65px;color:#111;font-weight:400;transform:scaleY(1.1);transform-origin:0 10.46px;white-space:pre;-webkit-text-stroke:0.22px currentColor;">Operators</div>
<svg class="a" style="left:83px;top:648px;" width="12" height="12" viewBox="0 0 12 12"><path d="M3 1C1 2 0.8 4 1 5.5S1 9 3 10M8 1c2 1 2.2 3 2 4.5S10 9 8 10" fill="none" stroke="#48a0b0" stroke-width="1.1"/><path d="M4 4h3M4 7h3" stroke="#48a0b0" stroke-width="0.9"/></svg>
<svg class="a" style="left:71px;top:653px;" width="9" height="12" viewBox="0 0 9 12"><path d="M1.2 0.8L7.2 6 1.2 11.2" fill="none" stroke="#1a2035" stroke-width="1.9"/></svg>
<div class="a" style="left:96.90px;top:647.54px;font-size:13.65px;line-height:13.65px;color:#111;font-weight:400;transform:scaleY(1.1);transform-origin:0 10.46px;white-space:pre;-webkit-text-stroke:0.22px currentColor;">Procedures</div>
<svg class="a" style="left:83px;top:664px;" width="12" height="12" viewBox="0 0 12 12"><text x="0" y="8.5" font-family="Liberation Sans" font-size="7" fill="#7040c0">1.3</text></svg>
<svg class="a" style="left:71px;top:669px;" width="9" height="12" viewBox="0 0 9 12"><path d="M1.2 0.8L7.2 6 1.2 11.2" fill="none" stroke="#1a2035" stroke-width="1.9"/></svg>
<div class="a" style="left:96.90px;top:663.54px;font-size:13.65px;line-height:13.65px;color:#111;font-weight:400;transform:scaleY(1.1);transform-origin:0 10.46px;white-space:pre;-webkit-text-stroke:0.22px currentColor;">Sequences</div>
<svg class="a" style="left:83px;top:680px;" width="12" height="12" viewBox="0 0 12 12"><rect x="0.5" y="0.5" width="10" height="10" rx="1.5" fill="#c8dcf4" stroke="#4a90d0" stroke-width="1"/><path d="M0.5 4h10M0.5 7h10M5.5 4v6.5" stroke="#4a90d0" stroke-width="0.9"/></svg>
<svg class="a" style="left:71px;top:685px;" width="9" height="12" viewBox="0 0 9 12"><path d="M1.2 0.8L7.2 6 1.2 11.2" fill="none" stroke="#1a2035" stroke-width="1.9"/></svg>
<div class="a" style="left:96.90px;top:679.54px;font-size:13.65px;line-height:13.65px;color:#111;font-weight:400;transform:scaleY(1.1);transform-origin:0 10.46px;white-space:pre;-webkit-text-stroke:0.22px currentColor;">Tables</div>
<svg class="a" style="left:83px;top:696px;" width="12" height="12" viewBox="0 0 12 12"><path d="M3 1C1 2 0.8 4 1 5.5S1 9 3 10M8 1c2 1 2.2 3 2 4.5S10 9 8 10" fill="none" stroke="#48a0b0" stroke-width="1.1"/><path d="M4 4h3M4 7h3" stroke="#48a0b0" stroke-width="0.9"/></svg>
<svg class="a" style="left:71px;top:701px;" width="9" height="12" viewBox="0 0 9 12"><path d="M1.2 0.8L7.2 6 1.2 11.2" fill="none" stroke="#1a2035" stroke-width="1.9"/></svg>
<div class="a" style="left:96.90px;top:695.54px;font-size:13.65px;line-height:13.65px;color:#111;font-weight:400;transform:scaleY(1.1);transform-origin:0 10.46px;white-space:pre;-webkit-text-stroke:0.22px currentColor;">Trigger Functions</div>
<svg class="a" style="left:83px;top:712px;" width="12" height="12" viewBox="0 0 12 12"><rect x="0.5" y="1.5" width="7" height="7" fill="#c8e8c8" stroke="#50a050" stroke-width="0.9"/><rect x="3" y="3.5" width="7.5" height="7" fill="#a8d8a8" stroke="#50a050" stroke-width="0.9"/></svg>
<svg class="a" style="left:71px;top:717px;" width="9" height="12" viewBox="0 0 9 12"><path d="M1.2 0.8L7.2 6 1.2 11.2" fill="none" stroke="#1a2035" stroke-width="1.9"/></svg>
<div class="a" style="left:96.90px;top:711.54px;font-size:13.65px;line-height:13.65px;color:#111;font-weight:400;transform:scaleY(1.1);transform-origin:0 10.46px;white-space:pre;-webkit-text-stroke:0.22px currentColor;">Types</div>
<div class="a" style="left:202px;top:188px;width:1078px;height:531px;background:#e6e6e6;"></div>
<div class="a" style="left:201px;top:188px;width:1px;height:531px;background:#c9cdd2;"></div>
<div class="a" style="left:202px;top:188px;width:1078px;height:21px;background:#e6e6e6;"></div>
<div class="a" style="left:202px;top:209px;width:1078px;height:1px;background:#d0d4d8;"></div>
<svg class="a" style="left:207px;top:194px;" width="14" height="13" viewBox="0 0 14 13"><ellipse cx="5.5" cy="2" rx="5.2" ry="1.8" fill="#4a7fb0"/><rect x="0.3" y="2" width="10.4" height="9" fill="#4a7fb0"/><path d="M0.3 4.8c1.3 1.2 9.1 1.2 10.4 0M0.3 7.6c1.3 1.2 9.1 1.2 10.4 0" stroke="#e6e6e6" stroke-width="0.9" fill="none"/><path d="M7 5.5l6.5 3.5L7 12.5z" fill="#4a7fb0" stroke="#e6e6e6" stroke-width="0.6"/></svg>
<div class="a" style="left:223.50px;top:196.44px;font-size:13.65px;line-height:13.65px;color:#3a6b9c;font-weight:400;transform:scaleY(1.1);transform-origin:0 10.46px;white-space:pre;-webkit-text-stroke:0.22px currentColor;">hr/app@appdb*</div>
<svg class="a" style="left:336px;top:198px;" width="9" height="9" viewBox="0 0 9 9"><path d="M1 1L8 8M8 1L1 8" stroke="#222" stroke-width="1.4"/></svg>
<div class="a" style="left:202px;top:208px;width:147px;height:2px;background:#3a6b9c;"></div>
<svg class="a" style="left:1260px;top:193px;" width="5" height="13" viewBox="0 0 5 13"><circle cx="2.5" cy="2" r="1.5" fill="#111"/><circle cx="2.5" cy="6.5" r="1.5" fill="#111"/><circle cx="2.5" cy="11" r="1.5" fill="#111"/></svg>
<div class="a" style="left:202px;top:210px;width:1078px;height:49px;background:#d8dce1;"></div>
<div class="a" style="left:202px;top:259px;width:1078px;height:1px;background:#c4c8ce;"></div>
<div class="a" style="left:205px;top:212px;width:352px;height:18px;background:#e9e9e9;border:1px solid #bcc1c8;border-radius:3px"></div>
<div class="a" style="left:231px;top:212px;width:1px;height:18px;background:#bcc1c8;"></div>
<div class="a" style="left:530px;top:212px;width:1px;height:18px;background:#bcc1c8;"></div>
<svg class="a" style="left:210px;top:213px;" width="17" height="16" viewBox="0 0 17 16"><path d="M2.5 14.5l3-3M14.5 1.5l-3 3" stroke="#111" stroke-width="1.4"/><path d="M5 7l-1.5 1.5a2.8 2.8 0 0 0 4 4L9 11zM7 5l1.5-1.5a2.8 2.8 0 0 1 4 4L11 9z" fill="none" stroke="#111" stroke-width="1.4"/><path d="M5.5 5.5l1.5-1.5M8.5 8.5l1.5-1.5" stroke="#111" stroke-width="1.2"/></svg>
<div class="a" style="left:238.00px;top:215.54px;font-size:13.65px;line-height:13.65px;color:#151515;font-weight:400;transform:scaleY(1.1);transform-origin:0 10.46px;white-space:pre;-webkit-text-stroke:0.22px currentColor;">hr/app@appdb</div>
<svg class="a" style="left:510px;top:219px;" width="9" height="5" viewBox="0 0 9 5"><path d="M0.6 0.6L4.5 4.4L8.4 0.6" fill="none" stroke="#222" stroke-width="1.4"/></svg>
<svg class="a" style="left:537px;top:214px;" width="14" height="13" viewBox="0 0 14 13"><ellipse cx="5.5" cy="2" rx="5.2" ry="1.8" fill="#111"/><rect x="0.3" y="2" width="10.4" height="9" fill="#111"/><path d="M0.3 4.8c1.3 1.2 9.1 1.2 10.4 0M0.3 7.6c1.3 1.2 9.1 1.2 10.4 0" stroke="#e9e9e9" stroke-width="0.9" fill="none"/><path d="M7 5.5l6.5 3.5L7 12.5z" fill="#111" stroke="#e9e9e9" stroke-width="0.6"/></svg>
<div class="a" style="left:1250px;top:211px;width:26px;height:19px;background:#ececec;border:1px solid #bcc1c8;border-radius:3px"></div>
<svg class="a" style="left:1255px;top:213px;" width="13" height="14" viewBox="0 0 13 14"><path d="M6.5 2.5A5 5 0 0 1 6.5 12.5" fill="none" stroke="#111" stroke-width="1.5"/><path d="M6.5 12.5A5 5 0 0 1 2.3 4.8" fill="none" stroke="#111" stroke-width="1.5" stroke-dasharray="1.6 1.4"/><path d="M4 2.5L7.5 0v5z" fill="#111"/></svg>
<div class="a" style="left:205px;top:236px;width:66px;height:18px;background:#e4e6e9;border:1px solid #bcc1c8;border-radius:3px"></div>
<div class="a" style="left:231px;top:236px;width:1px;height:18px;background:#bcc1c8;"></div>
<div class="a" style="left:258px;top:236px;width:1px;height:18px;background:#bcc1c8;"></div>
<div class="a" style="left:275px;top:236px;width:38px;height:18px;background:#e4e6e9;border:1px solid #bcc1c8;border-radius:3px"></div>
<div class="a" style="left:318px;top:236px;width:38px;height:18px;background:#dfe2e6;border:1px solid #bcc1c8;border-radius:3px"></div>
<div class="a" style="left:344px;top:236px;width:1px;height:18px;background:#bcc1c8;"></div>
<div class="a" style="left:361px;top:234px;width:99px;height:22px;background:#dfe2e6;border:1px solid #cdd1d6;border-radius:3px"></div>
<div class="a" style="left:465px;top:236px;width:92px;height:18px;background:#e4e6e9;border:1px solid #bcc1c8;border-radius:3px"></div>
<div class="a" style="left:490px;top:236px;width:1px;height:18px;background:#bcc1c8;"></div>
<div class="a" style="left:517px;top:236px;width:1px;height:18px;background:#bcc1c8;"></div>
<div class="a" style="left:544px;top:236px;width:1px;height:18px;background:#bcc1c8;"></div>
<div class="a" style="left:561px;top:236px;width:64px;height:18px;background:#e4e6e9;border:1px solid #bcc1c8;border-radius:3px"></div>
<div class="a" style="left:586px;top:236px;width:1px;height:18px;background:#bcc1c8;"></div>
<div class="a" style="left:613px;top:236px;width:1px;height:18px;background:#bcc1c8;"></div>
<div class="a" style="left:629px;top:236px;width:53px;height:18px;background:#dfe2e6;border:1px solid #bcc1c8;border-radius:3px"></div>
<div class="a" style="left:656px;top:236px;width:1px;height:18px;background:#bcc1c8;"></div>
<div class="a" style="left:686px;top:236px;width:39px;height:18px;background:#e4e6e9;border:1px solid #bcc1c8;border-radius:3px"></div>
<div class="a" style="left:730px;top:236px;width:25px;height:18px;background:#e4e6e9;border:1px solid #bcc1c8;border-radius:3px"></div>
<svg class="a" style="left:210px;top:239px;" width="15" height="12" viewBox="0 0 15 12"><path d="M0.5 1.5h5l1.5 1.5h7.5v8.5H0.5z" fill="#111"/></svg>
<svg class="a" style="left:238px;top:239px;" width="13" height="13" viewBox="0 0 13 13"><path d="M0.5 0.5h9.5l2.5 2.5v9.5H0.5z" fill="#111"/><rect x="3" y="1.5" width="6" height="3" fill="#e4e6e9"/><circle cx="6.5" cy="8.5" r="1.8" fill="#e4e6e9"/></svg>
<svg class="a" style="left:260px;top:243px;" width="9" height="5" viewBox="0 0 9 5"><path d="M0.6 0.6L4.5 4.4L8.4 0.6" fill="none" stroke="#222" stroke-width="1.4"/></svg>
<svg class="a" style="left:282px;top:238px;" width="15" height="15" viewBox="0 0 15 15"><path d="M1 14l1-4 8.5-8.5 3 3L5 13z" fill="#111"/><path d="M11.5 0.5l3 3" stroke="#111" stroke-width="1.5"/></svg>
<svg class="a" style="left:299px;top:243px;" width="9" height="5" viewBox="0 0 9 5"><path d="M0.6 0.6L4.5 4.4L8.4 0.6" fill="none" stroke="#222" stroke-width="1.4"/></svg>
<svg class="a" style="left:324px;top:239px;" width="14" height="12" viewBox="0 0 14 12"><path d="M0.5 0.5h13L8.5 6v5.5l-3-2V6z" fill="#777"/></svg>
<svg class="a" style="left:346px;top:243px;" width="8" height="5" viewBox="0 0 8 5"><path d="M0.6 0.6L4.0 4.4L7.4 0.6" fill="none" stroke="#777" stroke-width="1.3"/></svg>
<div class="a" style="left:367.50px;top:241.04px;font-size:13.65px;line-height:13.65px;color:#6a7282;font-weight:400;transform:scaleY(1.1);transform-origin:0 10.46px;white-space:pre;">No limit</div>
<svg class="a" style="left:442px;top:243px;" width="9" height="5" viewBox="0 0 9 5"><path d="M0 0h9L4.5 5z" fill="#6a7282"/></svg>
<svg class="a" style="left:472px;top:240px;" width="10" height="10" viewBox="0 0 10 10"><rect width="10" height="10" rx="1.5" fill="#666"/></svg>
<svg class="a" style="left:498px;top:239px;" width="12" height="13" viewBox="0 0 12 13"><path d="M1 0.5l10.5 6-10.5 6z" fill="#111"/></svg>
<svg class="a" style="left:523px;top:238px;" width="14" height="13" viewBox="0 0 14 13"><path d="M1 0.5l9 5-9 5z" fill="#111"/><path d="M3 8h3v5M3 11h2" stroke="#e4e6e9" stroke-width="1"/></svg>
<svg class="a" style="left:546px;top:243px;" width="9" height="5" viewBox="0 0 9 5"><path d="M0.6 0.6L4.5 4.4L8.4 0.6" fill="none" stroke="#222" stroke-width="1.4"/></svg>
<svg class="a" style="left:567px;top:239px;" width="12" height="12" viewBox="0 0 12 12"><rect width="12" height="12" rx="1.5" fill="#111"/><path d="M3.8 2.8h4.6v1.3H5.3v1.3h2.8v1.3H5.3v1.5h3.1v1.3H3.8z" fill="#fff"/></svg>
<svg class="a" style="left:593px;top:239px;" width="13" height="12" viewBox="0 0 13 12"><rect width="13" height="12" rx="1.5" fill="#111"/><path d="M3.5 10V6M6.5 10V3M9.5 10V8" stroke="#fff" stroke-width="1.5"/></svg>
<svg class="a" style="left:615px;top:243px;" width="9" height="5" viewBox="0 0 9 5"><path d="M0.6 0.6L4.5 4.4L8.4 0.6" fill="none" stroke="#222" stroke-width="1.4"/></svg>
<svg class="a" style="left:635px;top:238px;" width="15" height="15" viewBox="0 0 15 15"><ellipse cx="6" cy="2.2" rx="5.5" ry="2" fill="#777"/><path d="M0.5 2.2v8c0 1.1 2.5 2 5.5 2s5.5-.9 5.5-2v-8" fill="#777"/><path d="M0.5 5c1.5 1.3 9.5 1.3 11 0M0.5 8c1.5 1.3 9.5 1.3 11 0" stroke="#dfe2e6" stroke-width="0.9" fill="none"/><circle cx="11" cy="10" r="3.6" fill="#777" stroke="#dfe2e6" stroke-width="0.8"/><path d="M9.2 10l1.3 1.3 2.2-2.4" stroke="#fff" stroke-width="1" fill="none"/></svg>
<svg class="a" style="left:661px;top:238px;" width="15" height="15" viewBox="0 0 15 15"><ellipse cx="6" cy="2.2" rx="5.5" ry="2" fill="#777"/><path d="M0.5 2.2v8c0 1.1 2.5 2 5.5 2s5.5-.9 5.5-2v-8" fill="#777"/><path d="M0.5 5c1.5 1.3 9.5 1.3 11 0M0.5 8c1.5 1.3 9.5 1.3 11 0" stroke="#dfe2e6" stroke-width="0.9" fill="none"/><circle cx="11" cy="10" r="3.6" fill="#777" stroke="#dfe2e6" stroke-width="0.8"/><path d="M12.5 11.5a1.8 1.8 0 0 0-1.8-3H9.5M10.5 7.3L9.2 8.5l1.3 1.2" stroke="#fff" stroke-width="0.9" fill="none"/></svg>
<svg class="a" style="left:692px;top:239px;" width="14" height="12" viewBox="0 0 14 12"><path d="M4.5 1.5h9M4.5 6h9M4.5 10.5h9" stroke="#111" stroke-width="1.6"/><path d="M0.5 1.5h2M0.5 6h2M0.5 10.5h2" stroke="#111" stroke-width="1.2" stroke-dasharray="1 0.6"/></svg>
<svg class="a" style="left:709px;top:243px;" width="9" height="5" viewBox="0 0 9 5"><path d="M0.6 0.6L4.5 4.4L8.4 0.6" fill="none" stroke="#222" stroke-width="1.4"/></svg>
<svg class="a" style="left:736px;top:238px;" width="14" height="14" viewBox="0 0 14 14"><circle cx="7" cy="7" r="6.7" fill="#111"/><path d="M4.8 5.3a2.2 2.2 0 1 1 3 2c-.6.3-.8.7-.8 1.3" fill="none" stroke="#fff" stroke-width="1.5"/><circle cx="7" cy="10.8" r="0.9" fill="#fff"/></svg>
<div class="a" style="left:207.50px;top:267.54px;font-size:13.65px;line-height:13.65px;color:#3a6b9c;font-weight:400;transform:scaleY(1.1);transform-origin:0 10.46px;white-space:pre;-webkit-text-stroke:0.22px currentColor;">Query</div>
<div class="a" style="left:202px;top:279px;width:51px;height:2px;background:#3a6b9c;"></div>
<div class="a" style="left:258.00px;top:267.54px;font-size:13.65px;line-height:13.65px;color:#151515;font-weight:400;transform:scaleY(1.1);transform-origin:0 10.46px;white-space:pre;-webkit-text-stroke:0.22px currentColor;">Query History</div>
<svg class="a" style="left:1058px;top:265px;" width="11" height="11" viewBox="0 0 11 11"><path d="M1 10L10 1M5.5 1H10v4.5M1 5.5V10h4.5" fill="none" stroke="#111" stroke-width="1.4"/></svg>
<div class="a" style="left:202px;top:280px;width:876px;height:1px;background:#d0d4d8;"></div>
<div class="a" style="left:1079px;top:280px;width:201px;height:1px;background:#d0d4d8;"></div>
<div class="a" style="left:1078px;top:259px;width:1px;height:126px;background:#c9cdd2;"></div>
<div class="a" style="left:1084.50px;top:267.54px;font-size:13.65px;line-height:13.65px;color:#3a6b9c;font-weight:400;transform:scaleY(1.1);transform-origin:0 10.46px;white-space:pre;-webkit-text-stroke:0.22px currentColor;">Scratch Pad</div>
<svg class="a" style="left:1180px;top:268px;" width="9" height="9" viewBox="0 0 9 9"><path d="M1 1L8 8M8 1L1 8" stroke="#222" stroke-width="1.4"/></svg>
<div class="a" style="left:1079px;top:279px;width:115px;height:2px;background:#3a6b9c;"></div>
<svg class="a" style="left:1259px;top:265px;" width="11" height="11" viewBox="0 0 11 11"><path d="M1 10L10 1M5.5 1H10v4.5M1 5.5V10h4.5" fill="none" stroke="#111" stroke-width="1.4"/></svg>
<div class="a" style="left:202px;top:281px;width:25px;height:104px;background:#dcdee2;"></div>
<div class="a" style="left:202px;top:385px;width:1078px;height:1px;background:#c9cdd2;"></div>
<div class="a" style="left:205.50px;top:287.54px;font-size:13.65px;line-height:13.65px;color:#6a6e78;font-weight:400;transform:scaleY(1.1);transform-origin:0 10.46px;white-space:pre;">1</div>
<div class="a" style="left:231.00px;top:287.54px;font-size:13.65px;line-height:13.65px;color:#151515;font-weight:400;transform:scaleY(1.1);transform-origin:0 10.46px;white-space:pre;-webkit-text-stroke:0.22px currentColor;"><b style="color:#8a0f8a;font-weight:700">SELECT</b> <span style="color:#a82c24">"LAST_NAME"</span><span style="color:#40505e">, </span><span style="color:#a82c24">"JOB_ID"</span><span style="color:#40505e">, </span><span style="color:#a82c24">"SALARY"</span></div>
<div class="a" style="left:205.50px;top:306.34px;font-size:13.65px;line-height:13.65px;color:#6a6e78;font-weight:400;transform:scaleY(1.1);transform-origin:0 10.46px;white-space:pre;">2</div>
<div class="a" style="left:231.00px;top:306.34px;font-size:13.65px;line-height:13.65px;color:#151515;font-weight:400;transform:scaleY(1.1);transform-origin:0 10.46px;white-space:pre;-webkit-text-stroke:0.22px currentColor;"><b style="color:#8a0f8a;font-weight:700">FROM</b> <span style="color:#a82c24">"EmployeesDepartments"</span><span style="color:#40505e">.</span><span style="color:#a82c24">"EMPLOYEES"</span></div>
<div class="a" style="left:205.50px;top:325.14px;font-size:13.65px;line-height:13.65px;color:#6a6e78;font-weight:400;transform:scaleY(1.1);transform-origin:0 10.46px;white-space:pre;">3</div>
<div class="a" style="left:231.00px;top:325.14px;font-size:13.65px;line-height:13.65px;color:#151515;font-weight:400;transform:scaleY(1.1);transform-origin:0 10.46px;white-space:pre;-webkit-text-stroke:0.22px currentColor;"><b style="color:#8a0f8a;font-weight:700">WHERE</b> <span style="color:#a82c24">"JOB_ID"</span> <b style="color:#8a0f8a;font-weight:700">IN</b> <span style="color:#40505e">(</span><span style="color:#a82c24">'SA_REP'</span><span style="color:#40505e">, </span><span style="color:#a82c24">'ST_CLERK'</span><span style="color:#40505e">)</span></div>
<div class="a" style="left:205.50px;top:343.94px;font-size:13.65px;line-height:13.65px;color:#6a6e78;font-weight:400;transform:scaleY(1.1);transform-origin:0 10.46px;white-space:pre;">4</div>
<div class="a" style="left:231.00px;top:343.94px;font-size:13.65px;line-height:13.65px;color:#151515;font-weight:400;transform:scaleY(1.1);transform-origin:0 10.46px;white-space:pre;-webkit-text-stroke:0.22px currentColor;">  <b style="color:#8a0f8a;font-weight:700">AND</b> <span style="color:#a82c24">"SALARY"</span> <b style="color:#8a0f8a;font-weight:700">NOT</b> <b style="color:#8a0f8a;font-weight:700">IN</b> <span style="color:#40505e">(</span><span style="color:#94632a">2600</span><span style="color:#40505e">, </span><span style="color:#94632a">3100</span><span style="color:#40505e">, </span><span style="color:#94632a">8600</span><span style="color:#40505e">, </span><span style="color:#94632a">11000</span><span style="color:#40505e">)</span></div>
<div class="a" style="left:205.50px;top:362.74px;font-size:13.65px;line-height:13.65px;color:#6a6e78;font-weight:400;transform:scaleY(1.1);transform-origin:0 10.46px;white-space:pre;">5</div>
<div class="a" style="left:231.00px;top:362.74px;font-size:13.65px;line-height:13.65px;color:#151515;font-weight:400;transform:scaleY(1.1);transform-origin:0 10.46px;white-space:pre;-webkit-text-stroke:0.22px currentColor;"><b style="color:#8a0f8a;font-weight:700">ORDER</b> <b style="color:#8a0f8a;font-weight:700">BY</b> <span style="color:#a82c24">"LAST_NAME"</span> <b style="color:#8a0f8a;font-weight:700">ASC</b><span style="color:#40505e">;</span></div>
<svg class="a" style="left:218px;top:293px;" width="6" height="4" viewBox="0 0 6 4"><path d="M0.6 0.6L3.0 3.4L5.4 0.6" fill="none" stroke="#333" stroke-width="1.2"/></svg>
<div class="a" style="left:202px;top:379px;width:25px;height:6px;overflow:hidden"><div class="a" style="left:3.5px;top:1.5px;font-size:13.65px;line-height:13.65px;color:#6a6e78;transform:scaleY(1.1)">6</div></div>
<div class="a" style="left:207.50px;top:393.54px;font-size:13.65px;line-height:13.65px;color:#3a6b9c;font-weight:400;transform:scaleY(1.1);transform-origin:0 10.46px;white-space:pre;-webkit-text-stroke:0.22px currentColor;">Data Output</div>
<div class="a" style="left:202px;top:404px;width:100px;height:2px;background:#3a6b9c;"></div>
<div class="a" style="left:307.00px;top:393.54px;font-size:13.65px;line-height:13.65px;color:#151515;font-weight:400;transform:scaleY(1.1);transform-origin:0 10.46px;white-space:pre;-webkit-text-stroke:0.22px currentColor;">Messages</div>
<div class="a" style="left:383.00px;top:393.54px;font-size:13.65px;line-height:13.65px;color:#151515;font-weight:400;transform:scaleY(1.1);transform-origin:0 10.46px;white-space:pre;-webkit-text-stroke:0.22px currentColor;">Notifications</div>
<svg class="a" style="left:1259px;top:391px;" width="11" height="11" viewBox="0 0 11 11"><path d="M1 10L10 1M5.5 1H10v4.5M1 5.5V10h4.5" fill="none" stroke="#111" stroke-width="1.4"/></svg>
<div class="a" style="left:202px;top:406px;width:1078px;height:1px;background:#c9cdd2;"></div>
<div class="a" style="left:202px;top:407px;width:1078px;height:22px;background:#d8dce1;"></div>
<div class="a" style="left:202px;top:428px;width:1078px;height:1px;background:#c9cdd2;"></div>
<div class="a" style="left:204px;top:409px;width:25px;height:18px;background:#e4e6e9;border:1px solid #bcc1c8;border-radius:3px"></div>
<div class="a" style="left:231px;top:409px;width:104px;height:18px;background:#dfe2e6;border:1px solid #bcc1c8;border-radius:3px"></div>
<div class="a" style="left:256px;top:409px;width:1px;height:18px;background:#bcc1c8;"></div>
<div class="a" style="left:269px;top:409px;width:1px;height:18px;background:#bcc1c8;"></div>
<div class="a" style="left:296px;top:409px;width:1px;height:18px;background:#bcc1c8;"></div>
<div class="a" style="left:309px;top:409px;width:1px;height:18px;background:#bcc1c8;"></div>
<div class="a" style="left:339px;top:409px;width:26px;height:18px;background:#dfe2e6;border:1px solid #bcc1c8;border-radius:3px"></div>
<div class="a" style="left:369px;top:409px;width:26px;height:18px;background:#e4e6e9;border:1px solid #bcc1c8;border-radius:3px"></div>
<div class="a" style="left:399px;top:409px;width:26px;height:18px;background:#e4e6e9;border:1px solid #bcc1c8;border-radius:3px"></div>
<div class="a" style="left:429px;top:409px;width:26px;height:18px;background:#e4e6e9;border:1px solid #bcc1c8;border-radius:3px"></div>
<svg class="a" style="left:208px;top:412px;" width="17" height="12" viewBox="0 0 17 12"><path d="M0.5 1.5h10M0.5 5h10M0.5 8.5h6M12.5 6v6M9.5 9h6" stroke="#555" stroke-width="1.3"/></svg>
<svg class="a" style="left:236px;top:411px;" width="14" height="14" viewBox="0 0 14 14"><rect x="0.5" y="0.5" width="7" height="9" fill="none" stroke="#888" stroke-width="1"/><path d="M4 3.5h5.5l3 3v7H4z" fill="#888"/></svg>
<svg class="a" style="left:258px;top:415px;" width="9" height="5" viewBox="0 0 9 5"><path d="M0.6 0.6L4.5 4.4L8.4 0.6" fill="none" stroke="#333" stroke-width="1.4"/></svg>
<svg class="a" style="left:276px;top:411px;" width="12" height="14" viewBox="0 0 12 14"><rect x="0.8" y="2" width="10.4" height="11.5" rx="1" fill="none" stroke="#888" stroke-width="1.3"/><rect x="3.5" y="0.5" width="5" height="3" fill="#888"/></svg>
<svg class="a" style="left:298px;top:415px;" width="9" height="5" viewBox="0 0 9 5"><path d="M0.6 0.6L4.5 4.4L8.4 0.6" fill="none" stroke="#333" stroke-width="1.4"/></svg>
<svg class="a" style="left:316px;top:411px;" width="11" height="14" viewBox="0 0 11 14"><rect x="0" y="1" width="11" height="2" fill="#888"/><rect x="4" y="0" width="3" height="2" fill="#888"/><path d="M1 4h9l-.8 10H1.8z" fill="#888"/></svg>
<svg class="a" style="left:345px;top:411px;" width="15" height="14" viewBox="0 0 15 14"><ellipse cx="6" cy="2" rx="5.5" ry="1.8" fill="#888"/><path d="M0.5 2v8c0 1 2.5 1.8 5.5 1.8s5.5-.8 5.5-1.8V2" fill="#888"/><path d="M0.5 4.8c1.5 1.1 9.5 1.1 11 0M0.5 7.6c1.5 1.1 9.5 1.1 11 0" stroke="#dfe2e6" stroke-width="0.9" fill="none"/><rect x="8" y="8" width="6.5" height="5.5" fill="#888" stroke="#dfe2e6" stroke-width="0.7"/><rect x="9.5" y="10" width="3" height="2" fill="#dfe2e6"/></svg>
<svg class="a" style="left:375px;top:411px;" width="14" height="14" viewBox="0 0 14 14"><path d="M7 0.5v8M3 5l4 4 4-4" fill="none" stroke="#111" stroke-width="1.8"/><path d="M1 12.5h12" stroke="#111" stroke-width="1.8"/></svg>
<svg class="a" style="left:404px;top:413px;" width="16" height="9" viewBox="0 0 16 9"><path d="M0.8 8.2l4-5 3.5 3 4-5.5 3 3" fill="none" stroke="#111" stroke-width="1.6"/></svg>
<div class="a" style="left:432.50px;top:413.46px;font-size:11.8px;line-height:11.8px;color:#222;font-weight:400;transform:scaleY(1.2);transform-origin:0 9.04px;white-space:pre;-webkit-text-stroke:0.22px currentColor;">SQL</div>
<div class="a" style="left:762.00px;top:412.24px;font-size:13.65px;line-height:13.65px;color:#151515;font-weight:400;transform:scaleY(1.1);transform-origin:0 10.46px;white-space:pre;-webkit-text-stroke:0.22px currentColor;">Showing rows: 1 to 13</div>
<div class="a" style="left:935px;top:410px;width:22px;height:16px;background:#ececec;border:1px solid #b8bcc2;border-radius:3px"></div>
<svg class="a" style="left:940px;top:412px;" width="12" height="12" viewBox="0 0 12 12"><path d="M0.5 11.5l.8-3L8.5 1.3l2.2 2.2L3.5 10.7z" fill="#111"/></svg>
<div class="a" style="left:969px;top:409px;width:1px;height:18px;background:#c4c8ce;"></div>
<div class="a" style="left:973.00px;top:412.24px;font-size:13.65px;line-height:13.65px;color:#151515;font-weight:400;transform:scaleY(1.1);transform-origin:0 10.46px;white-space:pre;-webkit-text-stroke:0.22px currentColor;">Page No:</div>
<div class="a" style="left:1041px;top:409px;width:78px;height:17px;background:#e8e8e8;border-radius:3px"></div>
<div class="a" style="left:1048.50px;top:412.24px;font-size:13.65px;line-height:13.65px;color:#151515;font-weight:400;transform:scaleY(1.1);transform-origin:0 10.46px;white-space:pre;-webkit-text-stroke:0.22px currentColor;">1</div>
<div class="a" style="left:1123.00px;top:412.24px;font-size:13.65px;line-height:13.65px;color:#151515;font-weight:400;transform:scaleY(1.1);transform-origin:0 10.46px;white-space:pre;-webkit-text-stroke:0.22px currentColor;">of 1</div>
<div class="a" style="left:1166px;top:409px;width:1px;height:18px;background:#c4c8ce;"></div>
<div class="a" style="left:1170px;top:409px;width:106px;height:18px;background:#e2e4e8;border:1px solid #bcc1c8;border-radius:3px"></div>
<div class="a" style="left:1197px;top:409px;width:1px;height:18px;background:#bcc1c8;"></div>
<div class="a" style="left:1223px;top:409px;width:1px;height:18px;background:#bcc1c8;"></div>
<div class="a" style="left:1250px;top:409px;width:1px;height:18px;background:#bcc1c8;"></div>
<svg class="a" style="left:1178px;top:413px;" width="11" height="10" viewBox="0 0 11 10"><path d="M1 0.5v9" stroke="#777" stroke-width="1.5"/><path d="M10 0.5v9L3 5z" fill="#777"/></svg>
<svg class="a" style="left:1203px;top:413px;" width="13" height="10" viewBox="0 0 13 10"><path d="M6.5 0.5v9L0.5 5zM12.5 0.5v9L6.5 5z" fill="#777"/></svg>
<svg class="a" style="left:1230px;top:413px;" width="13" height="10" viewBox="0 0 13 10"><path d="M0.5 0.5v9L6.5 5zM6.5 0.5v9l6-4.5z" fill="#777"/></svg>
<svg class="a" style="left:1258px;top:413px;" width="11" height="10" viewBox="0 0 11 10"><path d="M10 0.5v9" stroke="#777" stroke-width="1.5"/><path d="M1 0.5v9L8 5z" fill="#777"/></svg>
<div class="a" style="left:202px;top:429px;width:554px;height:26px;background:#b8bec8;"></div>
<div class="a" style="left:202px;top:429px;width:29px;height:244px;background:#b2b8c2;"></div>
<div class="a" style="left:231px;top:429px;width:1px;height:244px;background:#d2d5da;"></div>
<div class="a" style="left:430px;top:429px;width:1px;height:244px;background:#d2d5da;"></div>
<div class="a" style="left:629px;top:429px;width:1px;height:244px;background:#d2d5da;"></div>
<div class="a" style="left:236.00px;top:431.34px;font-size:13.65px;line-height:13.65px;color:#111;font-weight:700;transform:scaleY(1.0);transform-origin:0 10.46px;white-space:pre;-webkit-text-stroke:0.22px currentColor;">LAST NAME</div>
<div class="a" style="left:236.00px;top:440.74px;font-size:13.65px;line-height:13.65px;color:#222;font-weight:400;transform:scaleY(1.05);transform-origin:0 10.46px;white-space:pre;-webkit-text-stroke:0.22px currentColor;">character varying (25)</div>
<svg class="a" style="left:419px;top:438px;" width="9" height="10" viewBox="0 0 9 10"><path d="M2 4.5V3a2.5 2.5 0 0 1 5 0v1.5" fill="none" stroke="#111" stroke-width="1.3"/><rect x="0.5" y="4.5" width="8" height="5.5" rx="1" fill="#111"/></svg>
<div class="a" style="left:435.00px;top:431.34px;font-size:13.65px;line-height:13.65px;color:#111;font-weight:700;transform:scaleY(1.0);transform-origin:0 10.46px;white-space:pre;-webkit-text-stroke:0.22px currentColor;">JOB ID</div>
<div class="a" style="left:435.00px;top:440.74px;font-size:13.65px;line-height:13.65px;color:#222;font-weight:400;transform:scaleY(1.05);transform-origin:0 10.46px;white-space:pre;-webkit-text-stroke:0.22px currentColor;">character varying (10)</div>
<svg class="a" style="left:618px;top:438px;" width="9" height="10" viewBox="0 0 9 10"><path d="M2 4.5V3a2.5 2.5 0 0 1 5 0v1.5" fill="none" stroke="#111" stroke-width="1.3"/><rect x="0.5" y="4.5" width="8" height="5.5" rx="1" fill="#111"/></svg>
<div class="a" style="left:634.50px;top:431.34px;font-size:13.65px;line-height:13.65px;color:#111;font-weight:700;transform:scaleY(1.0);transform-origin:0 10.46px;white-space:pre;-webkit-text-stroke:0.22px currentColor;">SALARY</div>
<div class="a" style="left:634.50px;top:440.74px;font-size:13.65px;line-height:13.65px;color:#222;font-weight:400;transform:scaleY(1.05);transform-origin:0 10.46px;white-space:pre;-webkit-text-stroke:0.22px currentColor;">numeric (8,2)</div>
<svg class="a" style="left:745px;top:438px;" width="9" height="10" viewBox="0 0 9 10"><path d="M2 4.5V3a2.5 2.5 0 0 1 5 0v1.5" fill="none" stroke="#111" stroke-width="1.3"/><rect x="0.5" y="4.5" width="8" height="5.5" rx="1" fill="#111"/></svg>
<div class="a" style="left:231px;top:455px;width:525px;height:17px;background:#d9dce2;"></div>
<div class="a" style="left:202px;top:455px;width:554px;height:1px;background:#cdd0d5;"></div>
<div class="a" style="left:207.00px;top:459.54px;font-size:13.65px;line-height:13.65px;color:#151515;font-weight:400;transform:scaleY(1.1);transform-origin:0 10.46px;white-space:pre;-webkit-text-stroke:0.22px currentColor;">1</div>
<div class="a" style="left:237.00px;top:459.54px;font-size:13.65px;line-height:13.65px;color:#151515;font-weight:400;transform:scaleY(1.1);transform-origin:0 10.46px;white-space:pre;-webkit-text-stroke:0.22px currentColor;">Abel</div>
<div class="a" style="left:435.50px;top:459.54px;font-size:13.65px;line-height:13.65px;color:#151515;font-weight:400;transform:scaleY(1.1);transform-origin:0 10.46px;white-space:pre;-webkit-text-stroke:0.22px currentColor;">SA_REP</div>
<div class="a" style="left:693.51px;top:459.54px;font-size:13.65px;line-height:13.65px;color:#151515;font-weight:400;transform:scaleY(1.1);transform-origin:0 10.46px;white-space:pre;-webkit-text-stroke:0.22px currentColor;">6000.00</div>
<div class="a" style="left:231px;top:472px;width:525px;height:16px;background:#e8e8e8;"></div>
<div class="a" style="left:202px;top:472px;width:554px;height:1px;background:#cdd0d5;"></div>
<div class="a" style="left:207.00px;top:476.27px;font-size:13.65px;line-height:13.65px;color:#151515;font-weight:400;transform:scaleY(1.1);transform-origin:0 10.46px;white-space:pre;-webkit-text-stroke:0.22px currentColor;">2</div>
<div class="a" style="left:237.00px;top:476.27px;font-size:13.65px;line-height:13.65px;color:#151515;font-weight:400;transform:scaleY(1.1);transform-origin:0 10.46px;white-space:pre;-webkit-text-stroke:0.22px currentColor;">Almeida Castro</div>
<div class="a" style="left:435.50px;top:476.27px;font-size:13.65px;line-height:13.65px;color:#151515;font-weight:400;transform:scaleY(1.1);transform-origin:0 10.46px;white-space:pre;-webkit-text-stroke:0.22px currentColor;">SA_REP</div>
<div class="a" style="left:693.51px;top:476.27px;font-size:13.65px;line-height:13.65px;color:#151515;font-weight:400;transform:scaleY(1.1);transform-origin:0 10.46px;white-space:pre;-webkit-text-stroke:0.22px currentColor;">7300.00</div>
<div class="a" style="left:231px;top:488px;width:525px;height:17px;background:#d9dce2;"></div>
<div class="a" style="left:202px;top:488px;width:554px;height:1px;background:#cdd0d5;"></div>
<div class="a" style="left:207.00px;top:493.00px;font-size:13.65px;line-height:13.65px;color:#151515;font-weight:400;transform:scaleY(1.1);transform-origin:0 10.46px;white-space:pre;-webkit-text-stroke:0.22px currentColor;">3</div>
<div class="a" style="left:237.00px;top:493.00px;font-size:13.65px;line-height:13.65px;color:#151515;font-weight:400;transform:scaleY(1.1);transform-origin:0 10.46px;white-space:pre;-webkit-text-stroke:0.22px currentColor;">Alves Rocha</div>
<div class="a" style="left:435.50px;top:493.00px;font-size:13.65px;line-height:13.65px;color:#151515;font-weight:400;transform:scaleY(1.1);transform-origin:0 10.46px;white-space:pre;-webkit-text-stroke:0.22px currentColor;">SA_REP</div>
<div class="a" style="left:693.51px;top:493.00px;font-size:13.65px;line-height:13.65px;color:#151515;font-weight:400;transform:scaleY(1.1);transform-origin:0 10.46px;white-space:pre;-webkit-text-stroke:0.22px currentColor;">7300.00</div>
<div class="a" style="left:231px;top:505px;width:525px;height:17px;background:#e8e8e8;"></div>
<div class="a" style="left:202px;top:505px;width:554px;height:1px;background:#cdd0d5;"></div>
<div class="a" style="left:207.00px;top:509.73px;font-size:13.65px;line-height:13.65px;color:#151515;font-weight:400;transform:scaleY(1.1);transform-origin:0 10.46px;white-space:pre;-webkit-text-stroke:0.22px currentColor;">4</div>
<div class="a" style="left:237.00px;top:509.73px;font-size:13.65px;line-height:13.65px;color:#151515;font-weight:400;transform:scaleY(1.1);transform-origin:0 10.46px;white-space:pre;-webkit-text-stroke:0.22px currentColor;">Barbosa Souza</div>
<div class="a" style="left:435.50px;top:509.73px;font-size:13.65px;line-height:13.65px;color:#151515;font-weight:400;transform:scaleY(1.1);transform-origin:0 10.46px;white-space:pre;-webkit-text-stroke:0.22px currentColor;">SA_REP</div>
<div class="a" style="left:693.51px;top:509.73px;font-size:13.65px;line-height:13.65px;color:#151515;font-weight:400;transform:scaleY(1.1);transform-origin:0 10.46px;white-space:pre;-webkit-text-stroke:0.22px currentColor;">9500.00</div>
<div class="a" style="left:231px;top:522px;width:525px;height:17px;background:#d9dce2;"></div>
<div class="a" style="left:202px;top:522px;width:554px;height:1px;background:#cdd0d5;"></div>
<div class="a" style="left:207.00px;top:526.46px;font-size:13.65px;line-height:13.65px;color:#151515;font-weight:400;transform:scaleY(1.1);transform-origin:0 10.46px;white-space:pre;-webkit-text-stroke:0.22px currentColor;">5</div>
<div class="a" style="left:237.00px;top:526.46px;font-size:13.65px;line-height:13.65px;color:#151515;font-weight:400;transform:scaleY(1.1);transform-origin:0 10.46px;white-space:pre;-webkit-text-stroke:0.22px currentColor;">Bell</div>
<div class="a" style="left:435.50px;top:526.46px;font-size:13.65px;line-height:13.65px;color:#151515;font-weight:400;transform:scaleY(1.1);transform-origin:0 10.46px;white-space:pre;-webkit-text-stroke:0.22px currentColor;">ST_CLERK</div>
<div class="a" style="left:693.51px;top:526.46px;font-size:13.65px;line-height:13.65px;color:#151515;font-weight:400;transform:scaleY(1.1);transform-origin:0 10.46px;white-space:pre;-webkit-text-stroke:0.22px currentColor;">5000.00</div>
<div class="a" style="left:231px;top:539px;width:525px;height:16px;background:#e8e8e8;"></div>
<div class="a" style="left:202px;top:539px;width:554px;height:1px;background:#cdd0d5;"></div>
<div class="a" style="left:207.00px;top:543.19px;font-size:13.65px;line-height:13.65px;color:#151515;font-weight:400;transform:scaleY(1.1);transform-origin:0 10.46px;white-space:pre;-webkit-text-stroke:0.22px currentColor;">6</div>
<div class="a" style="left:237.00px;top:543.19px;font-size:13.65px;line-height:13.65px;color:#151515;font-weight:400;transform:scaleY(1.1);transform-origin:0 10.46px;white-space:pre;-webkit-text-stroke:0.22px currentColor;">Grant</div>
<div class="a" style="left:435.50px;top:543.19px;font-size:13.65px;line-height:13.65px;color:#151515;font-weight:400;transform:scaleY(1.1);transform-origin:0 10.46px;white-space:pre;-webkit-text-stroke:0.22px currentColor;">SA_REP</div>
<div class="a" style="left:693.51px;top:543.19px;font-size:13.65px;line-height:13.65px;color:#151515;font-weight:400;transform:scaleY(1.1);transform-origin:0 10.46px;white-space:pre;-webkit-text-stroke:0.22px currentColor;">7000.00</div>
<div class="a" style="left:231px;top:555px;width:525px;height:17px;background:#d9dce2;"></div>
<div class="a" style="left:202px;top:555px;width:554px;height:1px;background:#cdd0d5;"></div>
<div class="a" style="left:207.00px;top:559.92px;font-size:13.65px;line-height:13.65px;color:#151515;font-weight:400;transform:scaleY(1.1);transform-origin:0 10.46px;white-space:pre;-webkit-text-stroke:0.22px currentColor;">7</div>
<div class="a" style="left:237.00px;top:559.92px;font-size:13.65px;line-height:13.65px;color:#151515;font-weight:400;transform:scaleY(1.1);transform-origin:0 10.46px;white-space:pre;-webkit-text-stroke:0.22px currentColor;">Hooper</div>
<div class="a" style="left:435.50px;top:559.92px;font-size:13.65px;line-height:13.65px;color:#151515;font-weight:400;transform:scaleY(1.1);transform-origin:0 10.46px;white-space:pre;-webkit-text-stroke:0.22px currentColor;">SA_REP</div>
<div class="a" style="left:693.51px;top:559.92px;font-size:13.65px;line-height:13.65px;color:#151515;font-weight:400;transform:scaleY(1.1);transform-origin:0 10.46px;white-space:pre;-webkit-text-stroke:0.22px currentColor;">9600.00</div>
<div class="a" style="left:231px;top:572px;width:525px;height:17px;background:#e8e8e8;"></div>
<div class="a" style="left:202px;top:572px;width:554px;height:1px;background:#cdd0d5;"></div>
<div class="a" style="left:207.00px;top:576.65px;font-size:13.65px;line-height:13.65px;color:#151515;font-weight:400;transform:scaleY(1.1);transform-origin:0 10.46px;white-space:pre;-webkit-text-stroke:0.22px currentColor;">8</div>
<div class="a" style="left:237.00px;top:576.65px;font-size:13.65px;line-height:13.65px;color:#151515;font-weight:400;transform:scaleY(1.1);transform-origin:0 10.46px;white-space:pre;-webkit-text-stroke:0.22px currentColor;">Rajs</div>
<div class="a" style="left:435.50px;top:576.65px;font-size:13.65px;line-height:13.65px;color:#151515;font-weight:400;transform:scaleY(1.1);transform-origin:0 10.46px;white-space:pre;-webkit-text-stroke:0.22px currentColor;">ST_CLERK</div>
<div class="a" style="left:693.51px;top:576.65px;font-size:13.65px;line-height:13.65px;color:#151515;font-weight:400;transform:scaleY(1.1);transform-origin:0 10.46px;white-space:pre;-webkit-text-stroke:0.22px currentColor;">3500.00</div>
<div class="a" style="left:231px;top:589px;width:525px;height:17px;background:#d9dce2;"></div>
<div class="a" style="left:202px;top:589px;width:554px;height:1px;background:#cdd0d5;"></div>
<div class="a" style="left:207.00px;top:593.38px;font-size:13.65px;line-height:13.65px;color:#151515;font-weight:400;transform:scaleY(1.1);transform-origin:0 10.46px;white-space:pre;-webkit-text-stroke:0.22px currentColor;">9</div>
<div class="a" style="left:237.00px;top:593.38px;font-size:13.65px;line-height:13.65px;color:#151515;font-weight:400;transform:scaleY(1.1);transform-origin:0 10.46px;white-space:pre;-webkit-text-stroke:0.22px currentColor;">Silva Pinto</div>
<div class="a" style="left:435.50px;top:593.38px;font-size:13.65px;line-height:13.65px;color:#151515;font-weight:400;transform:scaleY(1.1);transform-origin:0 10.46px;white-space:pre;-webkit-text-stroke:0.22px currentColor;">SA_REP</div>
<div class="a" style="left:693.51px;top:593.38px;font-size:13.65px;line-height:13.65px;color:#151515;font-weight:400;transform:scaleY(1.1);transform-origin:0 10.46px;white-space:pre;-webkit-text-stroke:0.22px currentColor;">7500.00</div>
<div class="a" style="left:231px;top:606px;width:525px;height:16px;background:#e8e8e8;"></div>
<div class="a" style="left:202px;top:606px;width:554px;height:1px;background:#cdd0d5;"></div>
<div class="a" style="left:207.00px;top:610.11px;font-size:13.65px;line-height:13.65px;color:#151515;font-weight:400;transform:scaleY(1.1);transform-origin:0 10.46px;white-space:pre;-webkit-text-stroke:0.22px currentColor;">10</div>
<div class="a" style="left:237.00px;top:610.11px;font-size:13.65px;line-height:13.65px;color:#151515;font-weight:400;transform:scaleY(1.1);transform-origin:0 10.46px;white-space:pre;-webkit-text-stroke:0.22px currentColor;">Taylor</div>
<div class="a" style="left:435.50px;top:610.11px;font-size:13.65px;line-height:13.65px;color:#151515;font-weight:400;transform:scaleY(1.1);transform-origin:0 10.46px;white-space:pre;-webkit-text-stroke:0.22px currentColor;">SA_REP</div>
<div class="a" style="left:693.51px;top:610.11px;font-size:13.65px;line-height:13.65px;color:#151515;font-weight:400;transform:scaleY(1.1);transform-origin:0 10.46px;white-space:pre;-webkit-text-stroke:0.22px currentColor;">5500.00</div>
<div class="a" style="left:231px;top:622px;width:525px;height:17px;background:#d9dce2;"></div>
<div class="a" style="left:202px;top:622px;width:554px;height:1px;background:#cdd0d5;"></div>
<div class="a" style="left:207.00px;top:626.84px;font-size:13.65px;line-height:13.65px;color:#151515;font-weight:400;transform:scaleY(1.1);transform-origin:0 10.46px;white-space:pre;-webkit-text-stroke:0.22px currentColor;">11</div>
<div class="a" style="left:237.00px;top:626.84px;font-size:13.65px;line-height:13.65px;color:#151515;font-weight:400;transform:scaleY(1.1);transform-origin:0 10.46px;white-space:pre;-webkit-text-stroke:0.22px currentColor;">Vargas</div>
<div class="a" style="left:435.50px;top:626.84px;font-size:13.65px;line-height:13.65px;color:#151515;font-weight:400;transform:scaleY(1.1);transform-origin:0 10.46px;white-space:pre;-webkit-text-stroke:0.22px currentColor;">ST_CLERK</div>
<div class="a" style="left:693.51px;top:626.84px;font-size:13.65px;line-height:13.65px;color:#151515;font-weight:400;transform:scaleY(1.1);transform-origin:0 10.46px;white-space:pre;-webkit-text-stroke:0.22px currentColor;">2500.00</div>
<div class="a" style="left:231px;top:639px;width:525px;height:17px;background:#e8e8e8;"></div>
<div class="a" style="left:202px;top:639px;width:554px;height:1px;background:#cdd0d5;"></div>
<div class="a" style="left:207.00px;top:643.57px;font-size:13.65px;line-height:13.65px;color:#151515;font-weight:400;transform:scaleY(1.1);transform-origin:0 10.46px;white-space:pre;-webkit-text-stroke:0.22px currentColor;">12</div>
<div class="a" style="left:237.00px;top:643.57px;font-size:13.65px;line-height:13.65px;color:#151515;font-weight:400;transform:scaleY(1.1);transform-origin:0 10.46px;white-space:pre;-webkit-text-stroke:0.22px currentColor;">Whalen</div>
<div class="a" style="left:435.50px;top:643.57px;font-size:13.65px;line-height:13.65px;color:#151515;font-weight:400;transform:scaleY(1.1);transform-origin:0 10.46px;white-space:pre;-webkit-text-stroke:0.22px currentColor;">SA_REP</div>
<div class="a" style="left:693.51px;top:643.57px;font-size:13.65px;line-height:13.65px;color:#151515;font-weight:400;transform:scaleY(1.1);transform-origin:0 10.46px;white-space:pre;-webkit-text-stroke:0.22px currentColor;">5000.00</div>
<div class="a" style="left:231px;top:656px;width:525px;height:16px;background:#d9dce2;"></div>
<div class="a" style="left:202px;top:656px;width:554px;height:1px;background:#cdd0d5;"></div>
<div class="a" style="left:207.00px;top:660.30px;font-size:13.65px;line-height:13.65px;color:#151515;font-weight:400;transform:scaleY(1.1);transform-origin:0 10.46px;white-space:pre;-webkit-text-stroke:0.22px currentColor;">13</div>
<div class="a" style="left:237.00px;top:660.30px;font-size:13.65px;line-height:13.65px;color:#151515;font-weight:400;transform:scaleY(1.1);transform-origin:0 10.46px;white-space:pre;-webkit-text-stroke:0.22px currentColor;">Zlotkey</div>
<div class="a" style="left:435.50px;top:660.30px;font-size:13.65px;line-height:13.65px;color:#151515;font-weight:400;transform:scaleY(1.1);transform-origin:0 10.46px;white-space:pre;-webkit-text-stroke:0.22px currentColor;">SA_REP</div>
<div class="a" style="left:685.44px;top:660.30px;font-size:13.65px;line-height:13.65px;color:#151515;font-weight:400;transform:scaleY(1.1);transform-origin:0 10.46px;white-space:pre;-webkit-text-stroke:0.22px currentColor;">10500.00</div>
<div class="a" style="left:202px;top:672px;width:555px;height:1px;background:#cdd0d5;"></div>
<div class="a" style="left:756px;top:429px;width:1px;height:244px;background:#d2d5da;"></div>
<div class="a" style="left:231px;top:455px;width:1px;height:218px;background:#d2d5da;"></div>
<div class="a" style="left:430px;top:455px;width:1px;height:218px;background:#d2d5da;"></div>
<div class="a" style="left:629px;top:455px;width:1px;height:218px;background:#d2d5da;"></div>
<div class="a" style="left:202px;top:696px;width:1078px;height:1px;background:#c9cdd2;"></div>
<div class="a" style="left:202px;top:697px;width:1078px;height:22px;background:#d8dce1;"></div>
<div class="a" style="left:210.00px;top:702.34px;font-size:13.65px;line-height:13.65px;color:#151515;font-weight:400;transform:scaleY(1.1);transform-origin:0 10.46px;white-space:pre;-webkit-text-stroke:0.22px currentColor;">Total rows: 13</div>
<div class="a" style="left:331px;top:700px;width:1px;height:17px;background:#c4c8ce;"></div>
<div class="a" style="left:340.50px;top:702.34px;font-size:13.65px;line-height:13.65px;color:#151515;font-weight:400;transform:scaleY(1.1);transform-origin:0 10.46px;white-space:pre;-webkit-text-stroke:0.22px currentColor;">Query complete 00:00:00.552</div>
<div class="a" style="left:568px;top:700px;width:1px;height:17px;background:#c4c8ce;"></div>
<div class="a" style="left:1140.50px;top:702.04px;font-size:13.65px;line-height:13.65px;color:#151515;font-weight:400;transform:scaleY(1.1);transform-origin:0 10.46px;white-space:pre;-webkit-text-stroke:0.22px currentColor;">LF</div>
<div class="a" style="left:1164px;top:700px;width:1px;height:17px;background:#c4c8ce;"></div>
<div class="a" style="left:1173.50px;top:702.04px;font-size:13.65px;line-height:13.65px;color:#151515;font-weight:400;transform:scaleY(1.1);transform-origin:0 10.46px;white-space:pre;-webkit-text-stroke:0.22px currentColor;">Ln 6, Col 1</div>
<div class="a" style="left:1279px;top:168px;width:1px;height:552px;background:#2a2a2a;"></div>
</body></html>
